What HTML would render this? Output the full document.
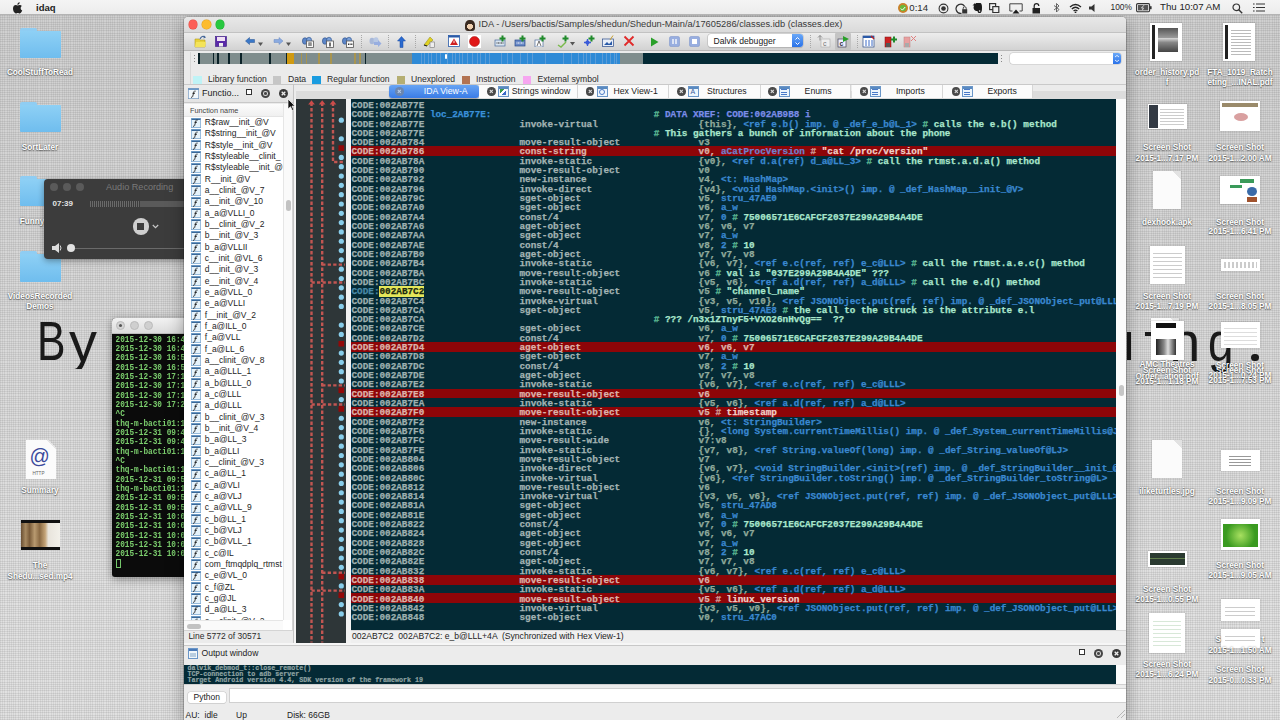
<!DOCTYPE html><html><head><meta charset="utf-8"><title>IDA</title><style>
*{margin:0;padding:0;box-sizing:border-box}
html,body{width:1280px;height:720px;overflow:hidden}
body{position:relative;font-family:"Liberation Sans",sans-serif;
 background-color:#dfdfdf;
 background-image:repeating-linear-gradient(0deg,rgba(0,0,0,.07) 0 1px,transparent 1px 2.2px),repeating-linear-gradient(90deg,rgba(0,0,0,.06) 0 1px,transparent 1px 2.2px),linear-gradient(180deg,rgba(0,0,0,.07),rgba(255,255,255,.05) 85%);}
.a{position:absolute}
.t{position:absolute;white-space:pre;line-height:1}
.mono{font-family:"Liberation Mono",monospace}
</style></head><body>
<div class="t" style="left:36.7px;top:313.2px;font-family:'Liberation Sans',sans-serif;font-size:55.9px;color:#1a1a1a;transform:scaleX(0.765);transform-origin:0 0">B</div>
<div class="a" style="left:60px;top:320px;width:45px;height:48.5px;overflow:hidden"><div class="t" style="left:8.9px;top:-6.5px;font-family:'Liberation Sans',sans-serif;font-size:55.9px;color:#1a1a1a;">y</div></div>
<div class="a" style="left:1127px;top:332px;width:4px;height:28px;background:#1a1a1a"></div>
<div class="a" style="left:1145px;top:332px;width:7px;height:3.5px;background:#1a1a1a"></div>
<div class="t" style="left:1169.3px;top:313.5px;font-family:'Liberation Sans',sans-serif;font-size:55.9px;color:#1a1a1a;">n</div>
<div class="t" style="left:1208.3px;top:313.5px;font-family:'Liberation Sans',sans-serif;font-size:55.9px;color:#1a1a1a;transform:scaleX(0.82);transform-origin:0 0">g</div>
<div class="a" style="left:1251.2px;top:353.7px;width:7.6px;height:7.6px;border-radius:50%;background:#1a1a1a"></div>
<div class="a" style="left:20px;top:28px;width:17px;height:5px;background:#8fcdf3;border-radius:2px 2px 0 0"></div>
<div class="a" style="left:20px;top:31px;width:41px;height:27px;background:linear-gradient(#8ed0f5,#6fbdee);border-radius:1px"></div>
<div class="t" style="left:-110px;width:300px;text-align:center;top:68.9px;font-size:8.2px;color:#fff;font-weight:bold;text-shadow:0 0 2px rgba(0,0,0,.55),0 1px 1px rgba(0,0,0,.4)">CoolStuffToRead</div>
<div class="a" style="left:20px;top:102px;width:17px;height:5px;background:#8fcdf3;border-radius:2px 2px 0 0"></div>
<div class="a" style="left:20px;top:105px;width:41px;height:27px;background:linear-gradient(#8ed0f5,#6fbdee);border-radius:1px"></div>
<div class="t" style="left:-110px;width:300px;text-align:center;top:143.9px;font-size:8.2px;color:#fff;font-weight:bold;text-shadow:0 0 2px rgba(0,0,0,.55),0 1px 1px rgba(0,0,0,.4)">SortLater</div>
<div class="a" style="left:20px;top:176px;width:17px;height:5px;background:#8fcdf3;border-radius:2px 2px 0 0"></div>
<div class="a" style="left:20px;top:179px;width:41px;height:27px;background:linear-gradient(#8ed0f5,#6fbdee);border-radius:1px"></div>
<div class="t" style="left:-118px;width:300px;text-align:center;top:217.9px;font-size:8.2px;color:#fff;font-weight:bold;text-shadow:0 0 2px rgba(0,0,0,.55),0 1px 1px rgba(0,0,0,.4)">Funny</div>
<div class="a" style="left:20px;top:251px;width:17px;height:5px;background:#8fcdf3;border-radius:2px 2px 0 0"></div>
<div class="a" style="left:20px;top:254px;width:41px;height:28px;background:linear-gradient(#8ed0f5,#6fbdee);border-radius:1px"></div>
<div class="t" style="left:-110px;width:300px;text-align:center;top:292.9px;font-size:8.2px;color:#fff;font-weight:bold;text-shadow:0 0 2px rgba(0,0,0,.55),0 1px 1px rgba(0,0,0,.4)">VideosRecorded</div>
<div class="t" style="left:-110px;width:300px;text-align:center;top:303.4px;font-size:8.2px;color:#fff;font-weight:bold;text-shadow:0 0 2px rgba(0,0,0,.55),0 1px 1px rgba(0,0,0,.4)">Demos</div>
<div class="a" style="left:25.5px;top:440px;width:30px;height:39px;background:linear-gradient(225deg,transparent 0 5px,#e6e6e6 5px 7px,#fbfbfb 7px);filter:drop-shadow(0 0 .6px rgba(0,0,0,.35))"></div>
<div class="t" style="left:29.5px;top:446px;font-size:20px;color:#3b4a9c;font-family:'Liberation Sans',sans-serif">@</div>
<div class="t" style="left:32.5px;top:472px;font-size:4.6px;color:#666">HTTP</div>
<div class="t" style="left:-110px;width:300px;text-align:center;top:486.9px;font-size:8.2px;color:#fff;font-weight:bold;text-shadow:0 0 2px rgba(0,0,0,.55),0 1px 1px rgba(0,0,0,.4)">Summary</div>
<div class="a" style="left:21px;top:520px;width:39px;height:30px;background:#111"><div class="a" style="left:0;top:3px;width:39px;height:24px;background:linear-gradient(90deg,#6a5034,#a58860 12%,#7a5c3a 22%,#b89a70 35%,#8a6a44 48%,#c4a478 62%,#e8e4dc 70%,#f2f0ea 100%)"></div></div>
<div class="t" style="left:-110px;width:300px;text-align:center;top:561.9px;font-size:8.2px;color:#fff;font-weight:bold;text-shadow:0 0 2px rgba(0,0,0,.55),0 1px 1px rgba(0,0,0,.4)">The</div>
<div class="t" style="left:-110px;width:300px;text-align:center;top:572.9px;font-size:8.2px;color:#fff;font-weight:bold;text-shadow:0 0 2px rgba(0,0,0,.55),0 1px 1px rgba(0,0,0,.4)">Shedu...sed.mp4</div>
<div class="a" style="left:1150px;top:23px;width:32px;height:38px;background:#fff;box-shadow:0 0 1px rgba(0,0,0,.45);"><div class="a" style="left:2px;top:2px;width:3px;height:34px;background:#222"></div><div class="a" style="left:8px;top:5px;width:20px;height:24px;background:linear-gradient(#555,#999 40%,#ddd 41%,#888 60%,#444)"></div></div>
<div class="t" style="left:1017px;width:300px;text-align:center;top:69.3px;font-size:8.2px;color:#fff;font-weight:bold;text-shadow:0 0 2px rgba(0,0,0,.55),0 1px 1px rgba(0,0,0,.4)">order_history.pd</div>
<div class="t" style="left:1017px;width:300px;text-align:center;top:78.9px;font-size:8.2px;color:#fff;font-weight:bold;text-shadow:0 0 2px rgba(0,0,0,.55),0 1px 1px rgba(0,0,0,.4)">f</div>
<div class="a" style="left:1223px;top:23px;width:32px;height:38px;background:#fff;box-shadow:0 0 1px rgba(0,0,0,.45);"><div class="a" style="left:2px;top:2px;width:3px;height:34px;background:#222"></div><div class="a" style="left:8px;top:6px;width:20px;height:26px;background:repeating-linear-gradient(#fff 0 1px,#bbb 1px 2px,#fff 2px 3px)"></div></div>
<div class="t" style="left:1090px;width:300px;text-align:center;top:69.3px;font-size:8.2px;color:#fff;font-weight:bold;text-shadow:0 0 2px rgba(0,0,0,.55),0 1px 1px rgba(0,0,0,.4)">FTA_1019_Ratch</div>
<div class="t" style="left:1090px;width:300px;text-align:center;top:78.9px;font-size:8.2px;color:#fff;font-weight:bold;text-shadow:0 0 2px rgba(0,0,0,.55),0 1px 1px rgba(0,0,0,.4)">eting_...INAL.pdf</div>
<div class="a" style="left:1148px;top:104px;width:39px;height:25px;background:#fff;box-shadow:0 0 1px rgba(0,0,0,.45);"><div class="a" style="left:1px;top:1px;width:9px;height:23px;background:#333a44"></div><div class="a" style="left:12px;top:3px;width:24px;height:18px;background:repeating-linear-gradient(#fff 0 2px,#ccc 2px 3px)"></div></div>
<div class="t" style="left:1017px;width:300px;text-align:center;top:143.7px;font-size:8.2px;color:#fff;font-weight:bold;text-shadow:0 0 2px rgba(0,0,0,.55),0 1px 1px rgba(0,0,0,.4)">Screen Shot</div>
<div class="t" style="left:1017px;width:300px;text-align:center;top:154.6px;font-size:8.2px;color:#fff;font-weight:bold;text-shadow:0 0 2px rgba(0,0,0,.55),0 1px 1px rgba(0,0,0,.4)">2015-1...7.17 PM</div>
<div class="a" style="left:1220px;top:101px;width:40px;height:30px;background:#fff;box-shadow:0 0 1px rgba(0,0,0,.45);"><div class="a" style="left:2px;top:2px;width:36px;height:4px;background:#9a8a6a"></div><div class="a" style="left:14px;top:12px;width:14px;height:8px;background:#d9a0a0;border-radius:50%"></div></div>
<div class="t" style="left:1090px;width:300px;text-align:center;top:143.7px;font-size:8.2px;color:#fff;font-weight:bold;text-shadow:0 0 2px rgba(0,0,0,.55),0 1px 1px rgba(0,0,0,.4)">Screen Shot</div>
<div class="t" style="left:1090px;width:300px;text-align:center;top:154.6px;font-size:8.2px;color:#fff;font-weight:bold;text-shadow:0 0 2px rgba(0,0,0,.55),0 1px 1px rgba(0,0,0,.4)">2015-1...2.00 AM</div>
<div class="a" style="left:1153px;top:171px;width:28px;height:38px;background:linear-gradient(225deg,#e2e2e2 0 6px,#fbfbfb 6px);box-shadow:0 0 1px rgba(0,0,0,.3)"></div>
<div class="t" style="left:1017px;width:300px;text-align:center;top:218.7px;font-size:8.2px;color:#fff;font-weight:bold;text-shadow:0 0 2px rgba(0,0,0,.55),0 1px 1px rgba(0,0,0,.4)">dexhook.apk</div>
<div class="a" style="left:1220px;top:176px;width:40px;height:28px;background:#fff;box-shadow:0 0 1px rgba(0,0,0,.45);"><div class="a" style="left:20px;top:3px;width:14px;height:4px;background:#3a9a5a"></div><div class="a" style="left:10px;top:9px;width:12px;height:3px;background:#3a9a5a"></div><div class="a" style="left:27px;top:11px;width:10px;height:9px;background:#3a6aa8;border-radius:50%"></div><div class="a" style="left:27px;top:21px;width:10px;height:5px;background:#a0522d"></div></div>
<div class="t" style="left:1090px;width:300px;text-align:center;top:218.7px;font-size:8.2px;color:#fff;font-weight:bold;text-shadow:0 0 2px rgba(0,0,0,.55),0 1px 1px rgba(0,0,0,.4)">Screen Shot</div>
<div class="t" style="left:1090px;width:300px;text-align:center;top:228.4px;font-size:8.2px;color:#fff;font-weight:bold;text-shadow:0 0 2px rgba(0,0,0,.55),0 1px 1px rgba(0,0,0,.4)">2015-1...6.41 PM</div>
<div class="a" style="left:1150px;top:246px;width:35px;height:38px;background:#fff;box-shadow:0 0 1px rgba(0,0,0,.45);"><div class="a" style="left:3px;top:4px;width:29px;height:30px;background:repeating-linear-gradient(#fff 0 3px,#ccc 3px 4px)"></div></div>
<div class="t" style="left:1017px;width:300px;text-align:center;top:292.9px;font-size:8.2px;color:#fff;font-weight:bold;text-shadow:0 0 2px rgba(0,0,0,.55),0 1px 1px rgba(0,0,0,.4)">Screen Shot</div>
<div class="t" style="left:1017px;width:300px;text-align:center;top:302.9px;font-size:8.2px;color:#fff;font-weight:bold;text-shadow:0 0 2px rgba(0,0,0,.55),0 1px 1px rgba(0,0,0,.4)">2015-1...7.19 PM</div>
<div class="a" style="left:1221px;top:259px;width:39px;height:12px;background:#fff;box-shadow:0 0 1px rgba(0,0,0,.45);"><div class="a" style="left:3px;top:3px;width:33px;height:6px;background:repeating-linear-gradient(90deg,#ccc 0 2px,#fff 2px 4px)"></div></div>
<div class="t" style="left:1090px;width:300px;text-align:center;top:292.9px;font-size:8.2px;color:#fff;font-weight:bold;text-shadow:0 0 2px rgba(0,0,0,.55),0 1px 1px rgba(0,0,0,.4)">Screen Shot</div>
<div class="t" style="left:1090px;width:300px;text-align:center;top:302.9px;font-size:8.2px;color:#fff;font-weight:bold;text-shadow:0 0 2px rgba(0,0,0,.55),0 1px 1px rgba(0,0,0,.4)">2015-1...8.05 PM</div>
<div class="a" style="left:1151px;top:318px;width:28px;height:10px;background:linear-gradient(225deg,#e2e2e2 0 6px,#fbfbfb 6px);box-shadow:0 0 1px rgba(0,0,0,.3)"></div>
<div class="a" style="left:1151px;top:321px;width:33px;height:39px;background:#fff;box-shadow:0 0 1px rgba(0,0,0,.45);"><div class="a" style="left:5px;top:2px;width:20px;height:5px;background:#111"></div><div class="a" style="left:5px;top:18px;width:20px;height:16px;background:linear-gradient(90deg,#222,#888 40%,#ddd 60%,#333)"></div></div>
<div class="a" style="left:1221px;top:322px;width:39px;height:26px;background:#fff;box-shadow:0 0 1px rgba(0,0,0,.45);"><div class="a" style="left:3px;top:3px;width:33px;height:20px;background:repeating-linear-gradient(#fff 0 3px,#ddd 3px 4px)"></div></div>
<div class="t" style="left:1017px;width:300px;text-align:center;top:360.9px;font-size:8.2px;color:#fff;font-weight:bold;text-shadow:0 0 2px rgba(0,0,0,.55),0 1px 1px rgba(0,0,0,.4)">AMC Theatres</div>
<div class="t" style="left:1017px;width:300px;text-align:center;top:366.9px;font-size:8.2px;color:#fff;font-weight:bold;text-shadow:0 0 2px rgba(0,0,0,.55),0 1px 1px rgba(0,0,0,.4)">Screen Shot</div>
<div class="t" style="left:1017px;width:300px;text-align:center;top:372.9px;font-size:8.2px;color:#fff;font-weight:bold;text-shadow:0 0 2px rgba(0,0,0,.55),0 1px 1px rgba(0,0,0,.4)">Order...ation.pdf</div>
<div class="t" style="left:1017px;width:300px;text-align:center;top:377.9px;font-size:8.2px;color:#fff;font-weight:bold;text-shadow:0 0 2px rgba(0,0,0,.55),0 1px 1px rgba(0,0,0,.4)">2015-1...1.18 PM</div>
<div class="t" style="left:1090px;width:300px;text-align:center;top:361.9px;font-size:8.2px;color:#fff;font-weight:bold;text-shadow:0 0 2px rgba(0,0,0,.55),0 1px 1px rgba(0,0,0,.4)">Screen Shot</div>
<div class="t" style="left:1090px;width:300px;text-align:center;top:366.9px;font-size:8.2px;color:#fff;font-weight:bold;text-shadow:0 0 2px rgba(0,0,0,.55),0 1px 1px rgba(0,0,0,.4)">Screen Shot</div>
<div class="t" style="left:1090px;width:300px;text-align:center;top:372.4px;font-size:8.2px;color:#fff;font-weight:bold;text-shadow:0 0 2px rgba(0,0,0,.55),0 1px 1px rgba(0,0,0,.4)">2015-1...0.24 PM</div>
<div class="t" style="left:1090px;width:300px;text-align:center;top:376.9px;font-size:8.2px;color:#fff;font-weight:bold;text-shadow:0 0 2px rgba(0,0,0,.55),0 1px 1px rgba(0,0,0,.4)">2015-1...7.53 PM</div>
<div class="a" style="left:1152px;top:440px;width:30px;height:38px;background:linear-gradient(225deg,#e2e2e2 0 6px,#fbfbfb 6px);box-shadow:0 0 1px rgba(0,0,0,.3)"></div>
<div class="t" style="left:1017px;width:300px;text-align:center;top:487.5px;font-size:8.2px;color:#fff;font-weight:bold;text-shadow:0 0 2px rgba(0,0,0,.55),0 1px 1px rgba(0,0,0,.4)">iliketurtles.jpg</div>
<div class="a" style="left:1221px;top:450px;width:39px;height:21px;background:#fff;box-shadow:0 0 1px rgba(0,0,0,.45);"><div class="a" style="left:8px;top:4px;width:22px;height:12px;background:repeating-linear-gradient(#fff 0 2px,#999 2px 3px)"></div></div>
<div class="t" style="left:1090px;width:300px;text-align:center;top:487.5px;font-size:8.2px;color:#fff;font-weight:bold;text-shadow:0 0 2px rgba(0,0,0,.55),0 1px 1px rgba(0,0,0,.4)">Screen Shot</div>
<div class="t" style="left:1090px;width:300px;text-align:center;top:498.4px;font-size:8.2px;color:#fff;font-weight:bold;text-shadow:0 0 2px rgba(0,0,0,.55),0 1px 1px rgba(0,0,0,.4)">2015-1...9.09 PM</div>
<div class="a" style="left:1221px;top:519px;width:39px;height:31px;background:#fff;box-shadow:0 0 1px rgba(0,0,0,.45);"><div class="a" style="left:2px;top:5px;width:35px;height:23px;background:radial-gradient(circle,#a8e060,#3a9a20 70%)"></div></div>
<div class="t" style="left:1090px;width:300px;text-align:center;top:561.7px;font-size:8.2px;color:#fff;font-weight:bold;text-shadow:0 0 2px rgba(0,0,0,.55),0 1px 1px rgba(0,0,0,.4)">Screen Shot</div>
<div class="t" style="left:1090px;width:300px;text-align:center;top:571.9px;font-size:8.2px;color:#fff;font-weight:bold;text-shadow:0 0 2px rgba(0,0,0,.55),0 1px 1px rgba(0,0,0,.4)">2015-1...9.05 AM</div>
<div class="a" style="left:1148px;top:551px;width:39px;height:16px;background:#fff;box-shadow:0 0 1px rgba(0,0,0,.45);"><div class="a" style="left:2px;top:2px;width:35px;height:12px;background:linear-gradient(#2a3a30,#2a3a30 40%,#6a8a50 45%,#2a3a30 50%)"></div></div>
<div class="t" style="left:1017px;width:300px;text-align:center;top:585.9px;font-size:8.2px;color:#fff;font-weight:bold;text-shadow:0 0 2px rgba(0,0,0,.55),0 1px 1px rgba(0,0,0,.4)">Screen Shot</div>
<div class="t" style="left:1017px;width:300px;text-align:center;top:595.9px;font-size:8.2px;color:#fff;font-weight:bold;text-shadow:0 0 2px rgba(0,0,0,.55),0 1px 1px rgba(0,0,0,.4)">2015-1...0.55 PM</div>
<div class="a" style="left:1149px;top:613px;width:36px;height:40px;background:#fff;box-shadow:0 0 1px rgba(0,0,0,.45);"><div class="a" style="left:4px;top:5px;width:28px;height:30px;background:repeating-linear-gradient(#fff 0 3px,#d8e8d8 3px 4px)"></div></div>
<div class="t" style="left:1017px;width:300px;text-align:center;top:660.7px;font-size:8.2px;color:#fff;font-weight:bold;text-shadow:0 0 2px rgba(0,0,0,.55),0 1px 1px rgba(0,0,0,.4)">Screen Shot</div>
<div class="t" style="left:1017px;width:300px;text-align:center;top:670.9px;font-size:8.2px;color:#fff;font-weight:bold;text-shadow:0 0 2px rgba(0,0,0,.55),0 1px 1px rgba(0,0,0,.4)">2015-1...6.24 PM</div>
<div class="a" style="left:1221px;top:599px;width:39px;height:22px;background:#fff;box-shadow:0 0 1px rgba(0,0,0,.45);"><div class="a" style="left:4px;top:5px;width:30px;height:12px;background:repeating-linear-gradient(#fff 0 3px,#ccc 3px 4px)"></div></div>
<div class="a" style="left:1221px;top:629px;width:39px;height:19px;background:#fff;box-shadow:0 0 1px rgba(0,0,0,.45);"><div class="a" style="left:4px;top:4px;width:30px;height:10px;background:repeating-linear-gradient(#fff 0 3px,#ccc 3px 4px)"></div></div>
<div class="t" style="left:1090px;width:300px;text-align:center;top:635.9px;font-size:8.2px;color:#fff;font-weight:bold;text-shadow:0 0 2px rgba(0,0,0,.55),0 1px 1px rgba(0,0,0,.4)">S                  t</div>
<div class="t" style="left:1090px;width:300px;text-align:center;top:646.9px;font-size:8.2px;color:#fff;font-weight:bold;text-shadow:0 0 2px rgba(0,0,0,.55),0 1px 1px rgba(0,0,0,.4)">2015-1...1.50 AM</div>
<div class="t" style="left:1090px;width:300px;text-align:center;top:665.9px;font-size:8.2px;color:#fff;font-weight:bold;text-shadow:0 0 2px rgba(0,0,0,.55),0 1px 1px rgba(0,0,0,.4)">Screen Shot</div>
<div class="t" style="left:1090px;width:300px;text-align:center;top:676.9px;font-size:8.2px;color:#fff;font-weight:bold;text-shadow:0 0 2px rgba(0,0,0,.55),0 1px 1px rgba(0,0,0,.4)">2015-0...0.33 PM</div>
<div class="a" style="left:44px;top:179px;width:160px;height:80px;background:#3c3c3c;border-radius:4px;box-shadow:0 2px 6px rgba(0,0,0,.35)">
<div class="a" style="left:5.899999999999999px;top:4px;width:8px;height:8px;border-radius:50%;background:#5a5a5a"></div>
<div class="a" style="left:19.200000000000003px;top:4px;width:8px;height:8px;border-radius:50%;background:#5a5a5a"></div>
<div class="a" style="left:32.400000000000006px;top:4px;width:8px;height:8px;border-radius:50%;background:#5a5a5a"></div>
<div class="t" style="left:62px;top:3.8px;font-size:9.1px;color:#7a7a7a">Audio Recording</div>
<div class="t" style="left:8.5px;top:20.5px;font-size:8px;color:#e4e4e4;font-weight:bold">07:39</div>
<div class="a" style="left:46px;top:21.8px;width:50px;height:6px;background:repeating-linear-gradient(90deg,#6a6a6a 0 1px,#3c3c3c 1px 2px)"></div>
<div class="a" style="left:96px;top:21.8px;width:70px;height:6px;background:#5a5a5a"></div>
<div class="a" style="left:88.5px;top:39px;width:16.5px;height:16.5px;border-radius:50%;background:#cfcfcf"></div>
<div class="a" style="left:93.3px;top:43.8px;width:7px;height:7px;background:#3c3c3c"></div>
<svg class="a" style="left:108px;top:44.5px" width="7" height="5"><path d="M.8 1l2.7 2.6L6.2 1" stroke="#c8c8c8" stroke-width="1.2" fill="none"/></svg>
<svg class="a" style="left:8px;top:64px" width="10" height="10"><path d="M0 3h3l4-3v10l-4-3H0z" fill="#ddd"/><path d="M8.2 2.5q1.6 2.5 0 5" stroke="#ddd" fill="none" stroke-width="1"/></svg>
<div class="a" style="left:30px;top:68.5px;width:140px;height:1.5px;background:#6a6a6a"></div>
<div class="a" style="left:22.5px;top:64.5px;width:8px;height:8px;border-radius:50%;background:#e2e2e2"></div>
</div>
<div class="a" style="left:112px;top:318px;width:100px;height:259px;background:#0b0b0b;border-radius:4px 4px 3px 3px;box-shadow:0 2px 8px rgba(0,0,0,.4);overflow:hidden">
<div class="a" style="left:0;top:0;width:100px;height:15.5px;background:linear-gradient(#f2f2f2,#dcdcdc);border-bottom:1px solid #bdbdbd"></div>
<div class="a" style="left:4.400000000000006px;top:3px;width:9px;height:9px;border-radius:50%;background:#d4d4d4;border:0.5px solid #bbb"></div>
<div class="a" style="left:18.099999999999994px;top:3px;width:9px;height:9px;border-radius:50%;background:#cfcfcf;border:0.5px solid #bbb"></div>
<div class="a" style="left:31.599999999999994px;top:3px;width:9px;height:9px;border-radius:50%;background:#cfcfcf;border:0.5px solid #bbb"></div>
<div class="a" style="left:7.2px;top:6.4px;width:3px;height:3px;border-radius:50%;background:#555"></div>
<div class="t mono" style="left:3.5px;top:18.60px;font-size:7.75px;color:#7ccf6e;font-weight:bold;transform:scaleY(1.18);transform-origin:0 50%">2015-12-30 16:4</div>
<div class="t mono" style="left:3.5px;top:27.94px;font-size:7.75px;color:#7ccf6e;font-weight:bold;transform:scaleY(1.18);transform-origin:0 50%">2015-12-30 16:4</div>
<div class="t mono" style="left:3.5px;top:37.28px;font-size:7.75px;color:#7ccf6e;font-weight:bold;transform:scaleY(1.18);transform-origin:0 50%">2015-12-30 16:5</div>
<div class="t mono" style="left:3.5px;top:46.62px;font-size:7.75px;color:#7ccf6e;font-weight:bold;transform:scaleY(1.18);transform-origin:0 50%">2015-12-30 16:5</div>
<div class="t mono" style="left:3.5px;top:55.96px;font-size:7.75px;color:#7ccf6e;font-weight:bold;transform:scaleY(1.18);transform-origin:0 50%">2015-12-30 17:1</div>
<div class="t mono" style="left:3.5px;top:65.30px;font-size:7.75px;color:#7ccf6e;font-weight:bold;transform:scaleY(1.18);transform-origin:0 50%">2015-12-30 17:1</div>
<div class="t mono" style="left:3.5px;top:74.64px;font-size:7.75px;color:#7ccf6e;font-weight:bold;transform:scaleY(1.18);transform-origin:0 50%">2015-12-30 17:1</div>
<div class="t mono" style="left:3.5px;top:83.98px;font-size:7.75px;color:#7ccf6e;font-weight:bold;transform:scaleY(1.18);transform-origin:0 50%">2015-12-30 17:2</div>
<div class="t mono" style="left:3.5px;top:93.32px;font-size:7.75px;color:#7ccf6e;font-weight:bold;transform:scaleY(1.18);transform-origin:0 50%">^C</div>
<div class="t mono" style="left:3.5px;top:102.66px;font-size:7.75px;color:#7ccf6e;font-weight:bold;transform:scaleY(1.18);transform-origin:0 50%">thq-m-bacti01:1</div>
<div class="t mono" style="left:3.5px;top:112.00px;font-size:7.75px;color:#7ccf6e;font-weight:bold;transform:scaleY(1.18);transform-origin:0 50%">2015-12-31 09:4</div>
<div class="t mono" style="left:3.5px;top:121.34px;font-size:7.75px;color:#7ccf6e;font-weight:bold;transform:scaleY(1.18);transform-origin:0 50%">2015-12-31 09:4</div>
<div class="t mono" style="left:3.5px;top:130.68px;font-size:7.75px;color:#7ccf6e;font-weight:bold;transform:scaleY(1.18);transform-origin:0 50%">thq-m-bacti01:1</div>
<div class="t mono" style="left:3.5px;top:140.02px;font-size:7.75px;color:#7ccf6e;font-weight:bold;transform:scaleY(1.18);transform-origin:0 50%">^C</div>
<div class="t mono" style="left:3.5px;top:149.36px;font-size:7.75px;color:#7ccf6e;font-weight:bold;transform:scaleY(1.18);transform-origin:0 50%">thq-m-bacti01:1</div>
<div class="t mono" style="left:3.5px;top:158.70px;font-size:7.75px;color:#7ccf6e;font-weight:bold;transform:scaleY(1.18);transform-origin:0 50%">2015-12-31 09:5</div>
<div class="t mono" style="left:3.5px;top:168.04px;font-size:7.75px;color:#7ccf6e;font-weight:bold;transform:scaleY(1.18);transform-origin:0 50%">thq-m-bacti01:1</div>
<div class="t mono" style="left:3.5px;top:177.38px;font-size:7.75px;color:#7ccf6e;font-weight:bold;transform:scaleY(1.18);transform-origin:0 50%">2015-12-31 09:5</div>
<div class="t mono" style="left:3.5px;top:186.72px;font-size:7.75px;color:#7ccf6e;font-weight:bold;transform:scaleY(1.18);transform-origin:0 50%">2015-12-31 09:5</div>
<div class="t mono" style="left:3.5px;top:196.06px;font-size:7.75px;color:#7ccf6e;font-weight:bold;transform:scaleY(1.18);transform-origin:0 50%">2015-12-31 10:0</div>
<div class="t mono" style="left:3.5px;top:205.40px;font-size:7.75px;color:#7ccf6e;font-weight:bold;transform:scaleY(1.18);transform-origin:0 50%">2015-12-31 10:0</div>
<div class="t mono" style="left:3.5px;top:214.74px;font-size:7.75px;color:#7ccf6e;font-weight:bold;transform:scaleY(1.18);transform-origin:0 50%">2015-12-31 10:0</div>
<div class="t mono" style="left:3.5px;top:224.08px;font-size:7.75px;color:#7ccf6e;font-weight:bold;transform:scaleY(1.18);transform-origin:0 50%">2015-12-31 10:0</div>
<div class="t mono" style="left:3.5px;top:233.42px;font-size:7.75px;color:#7ccf6e;font-weight:bold;transform:scaleY(1.18);transform-origin:0 50%">2015-12-31 10:0</div>
<div class="a" style="left:4px;top:240.56px;width:5px;height:9px;border:1px solid #74c66a"></div>
</div>
<div class="a" style="left:184px;top:17px;width:942px;height:703px;background:#ebebeb;border-radius:4px 4px 0 0;box-shadow:0 0 0 .6px rgba(0,0,0,.25),0 6px 18px rgba(0,0,0,.35);overflow:hidden">
<div class="a" style="left:0;top:0;width:942px;height:15px;background:linear-gradient(#e8e8e8,#dadada)"></div>
<div class="a" style="left:0;top:14.5px;width:942px;height:19px;background:linear-gradient(#ededed,#d2d2d2);border-top:.8px solid #c2c2c2;border-bottom:.8px solid #b8b8b8"></div>
</div>
<div class="a" style="left:188.79999999999998px;top:20.4px;width:8.6px;height:8.6px;border-radius:50%;background:#fc5f57;box-shadow:0 0 0 .5px #de4a41"></div>
<div class="a" style="left:202.29999999999998px;top:20.4px;width:8.6px;height:8.6px;border-radius:50%;background:#fdbc2e;box-shadow:0 0 0 .5px #de9f23"></div>
<div class="a" style="left:215.7px;top:20.4px;width:8.6px;height:8.6px;border-radius:50%;background:#28c840;box-shadow:0 0 0 .5px #1aab29"></div>
<div class="a" style="left:465px;top:19.5px;width:10px;height:11px;border-radius:45% 45% 30% 30%;background:radial-gradient(circle at 50% 60%,#f0d0b0 35%,#3a2a20 36%)"></div>
<div class="t" style="left:478.6px;top:20.4px;font-size:9.29px;color:#3a3a3a">IDA - /Users/bactis/Samples/shedun/Shedun-Main/a/17605286/classes.idb (classes.dex)</div>
<svg class="a" style="left:194px;top:35px;" width="13" height="13" viewBox="0 0 13 13"><path d="M1 4h4l1 1h5v7H1z" fill="#e8d23a" stroke="#b49a20" stroke-width=".6"/><path d="M2 7h10l-1 5H1z" fill="#f4e45a"/><path d="M6 4q2-4 5-2" stroke="#4a6a9a" stroke-width="1.3" fill="none"/><path d="M10 0.5l2 2-2.5 1z" fill="#4a6a9a"/></svg>
<svg class="a" style="left:215px;top:35.5px;" width="12" height="11" viewBox="0 0 12 11"><rect x=".5" y=".5" width="11" height="10" fill="#5a2aa8" stroke="#3a1a80" stroke-width=".6"/><rect x="2" y="1" width="8" height="4" fill="#f0e0f4"/><rect x="4" y="7" width="4" height="3.5" fill="#eee"/></svg>
<svg class="a" style="left:245px;top:37px;" width="18" height="10" viewBox="0 0 18 10"><path d="M0.5 4l4-3.5v2h5v3h-5v2z" fill="#3a78c8" stroke="#245090" stroke-width=".5"/><path d="M13 5.5h5l-2.5 3.5z" fill="#555"/></svg>
<svg class="a" style="left:273px;top:37px;" width="18" height="10" viewBox="0 0 18 10"><path d="M10 4l-4-3.5v2H1v3h5v2z" fill="#8aaae0" stroke="#6a8ac0" stroke-width=".5"/><path d="M13 5.5h5l-2.5 3.5z" fill="#555"/></svg>
<svg class="a" style="left:302px;top:36px;" width="12" height="12" viewBox="0 0 12 12"><ellipse cx="3" cy="5" rx="2.6" ry="3.3" fill="#5d86c8" stroke="#2a4f8a" stroke-width=".6"/><ellipse cx="7" cy="4.5" rx="2.6" ry="3.3" fill="#7aa0d8" stroke="#2a4f8a" stroke-width=".6"/><rect x="4.5" y="5" width="7" height="6.5" fill="#fafafa" stroke="#555" stroke-width=".8"/><path d="M6.5 7h3M6.5 9h3M7 6.5v3.5M9 6.5v3.5" stroke="#222" stroke-width=".6"/></svg>
<svg class="a" style="left:322px;top:36px;" width="12" height="12" viewBox="0 0 12 12"><ellipse cx="3" cy="5" rx="2.6" ry="3.3" fill="#5d86c8" stroke="#2a4f8a" stroke-width=".6"/><ellipse cx="7" cy="4.5" rx="2.6" ry="3.3" fill="#7aa0d8" stroke="#2a4f8a" stroke-width=".6"/><rect x="4.5" y="5" width="7" height="6.5" fill="#fafafa" stroke="#555" stroke-width=".8"/><path d="M8 6.5v4" stroke="#111" stroke-width="1.2"/></svg>
<svg class="a" style="left:342px;top:36px;" width="12" height="12" viewBox="0 0 12 12"><ellipse cx="3" cy="5" rx="2.6" ry="3.3" fill="#5d86c8" stroke="#2a4f8a" stroke-width=".6"/><ellipse cx="7" cy="4.5" rx="2.6" ry="3.3" fill="#7aa0d8" stroke="#2a4f8a" stroke-width=".6"/><rect x="4.5" y="5" width="7" height="6.5" fill="#fafafa" stroke="#555" stroke-width=".8"/><path d="M6 8.3h5" stroke="#333" stroke-width="1.4" stroke-dasharray="1 .6"/></svg>
<svg class="a" style="left:369px;top:36px;" width="13" height="12" viewBox="0 0 13 12"><ellipse cx="3" cy="5" rx="2.5" ry="3.2" fill="#a8b8d8"/><ellipse cx="7" cy="4.5" rx="2.5" ry="3.2" fill="#b8c8e4"/><path d="M5 6h4V4l3.5 3.5L9 11V9H5z" fill="#98aee0"/></svg>
<svg class="a" style="left:397px;top:36px;" width="9" height="12" viewBox="0 0 9 12"><path d="M4.5 0.5L8.5 5H6v6.5H3V5H0.5z" fill="#2a6ad0" stroke="#1a4aa0" stroke-width=".5"/></svg>
<div class="a" style="left:361.3px;top:35px;width:1px;height:13px;background:repeating-linear-gradient(#a8a8a8 0 1px,transparent 1px 2px)"></div>
<div class="a" style="left:388.4px;top:35px;width:1px;height:13px;background:repeating-linear-gradient(#a8a8a8 0 1px,transparent 1px 2px)"></div>
<div class="a" style="left:414.7px;top:35px;width:1px;height:13px;background:repeating-linear-gradient(#a8a8a8 0 1px,transparent 1px 2px)"></div>
<svg class="a" style="left:423px;top:36px;" width="12" height="12" viewBox="0 0 12 12"><path d="M1 9l6-8 3 3-6 6z" fill="#e0d020" stroke="#8a8a20" stroke-width=".5"/><path d="M1 9l3 1" stroke="#222" stroke-width="1.2"/><rect x="7" y="6" width="4.5" height="5.5" fill="#eee" stroke="#777" stroke-width=".6"/></svg>
<svg class="a" style="left:448px;top:35px;" width="12" height="12" viewBox="0 0 12 12"><rect x=".5" y=".5" width="11" height="11" fill="#fff" stroke="#2a5aa8" stroke-width=".8"/><rect x=".5" y=".5" width="11" height="2" fill="#2a5aa8"/><path d="M6 3.5l4 6.5H2z" fill="#d02020"/><path d="M6 5.5v2.5" stroke="#fff" stroke-width=".9"/></svg>
<svg class="a" style="left:468px;top:35px;" width="13" height="13" viewBox="0 0 13 13"><rect x="0" y="0" width="13" height="13" fill="#fff"/><circle cx="6.5" cy="6.5" r="5" fill="#e01818" stroke="#a01010" stroke-width=".5"/></svg>
<svg class="a" style="left:494px;top:35px;" width="12" height="12" viewBox="0 0 12 12"><rect x="1" y="5" width="10" height="6" fill="#d8e4f0" stroke="#4a6a9a" stroke-width=".7"/><path d="M2.5 8h7" stroke="#333" stroke-width="1" stroke-dasharray="1 .5"/><path d="M8.5 0.5v6M5.5 3.5h6" stroke="#1f8a2a" stroke-width="2"/></svg>
<svg class="a" style="left:514px;top:35px;" width="12" height="12" viewBox="0 0 12 12"><rect x="1" y="5" width="10" height="6" fill="#6a8ac8" stroke="#2a4a8a" stroke-width=".7"/><path d="M2.5 8h7" stroke="#fff" stroke-width="1" stroke-dasharray="1 .5"/><path d="M8.5 0.5v6M5.5 3.5h6" stroke="#1f8a2a" stroke-width="2"/></svg>
<svg class="a" style="left:534px;top:35px;" width="12" height="12" viewBox="0 0 12 12"><rect x="1" y="5" width="8" height="7" fill="#fff" stroke="#4a6a9a" stroke-width=".7"/><path d="M3 11l2-5 2 5" stroke="#333" stroke-width=".7" fill="none"/><path d="M8.5 0.5v6M5.5 3.5h6" stroke="#1f8a2a" stroke-width="2"/></svg>
<svg class="a" style="left:557px;top:35px;" width="18" height="13" viewBox="0 0 18 13"><path d="M1 10l3 2 5-5" stroke="#7aba4a" stroke-width="1.4" fill="none"/><path d="M8.5 0.5v6M5.5 3.5h6" stroke="#1f8a2a" stroke-width="2"/><path d="M13 7h5l-2.5 3.5z" fill="#555"/></svg>
<svg class="a" style="left:583px;top:35px;" width="12" height="12" viewBox="0 0 12 12"><path d="M3 9l3-3M3 6l3 3M1 7.5h7M4.5 4v7" stroke="#3a5ad8" stroke-width="1.3"/><path d="M8.5 0.5v6M5.5 3.5h6" stroke="#1f8a2a" stroke-width="2"/></svg>
<svg class="a" style="left:602px;top:35px;" width="13" height="12" viewBox="0 0 13 12"><rect x=".5" y="4" width="11" height="7.5" fill="#e8eef8" stroke="#2a4a8a" stroke-width=".7"/><path d="M2 10l3-3 2 2 3-3v4z" fill="#2a5aa8"/><path d="M8 5l3-4.5" stroke="#c8a030" stroke-width="1"/></svg>
<svg class="a" style="left:623px;top:35px;" width="12" height="12" viewBox="0 0 12 12"><path d="M1.5 1.5l9 9M10.5 1.5l-9 9" stroke="#e02a2a" stroke-width="1.8"/></svg>
<svg class="a" style="left:650px;top:37px;" width="9" height="10" viewBox="0 0 9 10"><path d="M1 0.5l7.5 4.5L1 9.5z" fill="#2aa02a"/></svg>
<svg class="a" style="left:669px;top:36px;" width="11" height="11" viewBox="0 0 11 11"><rect x=".5" y=".5" width="10" height="10" rx="1.5" fill="#98aee0" stroke="#7890c8" stroke-width=".5"/><path d="M4 3v5M7 3v5" stroke="#fff" stroke-width="1.3"/></svg>
<svg class="a" style="left:689px;top:36px;" width="11" height="11" viewBox="0 0 11 11"><rect x=".5" y=".5" width="10" height="10" rx="1.5" fill="#98aee0" stroke="#7890c8" stroke-width=".5"/><rect x="3" y="3" width="5" height="5" fill="#fff"/></svg>
<div class="a" style="left:708px;top:34.3px;width:95px;height:13.2px;background:#fff;border-radius:3px;box-shadow:0 0 0 .6px #bbb,0 .6px 1px rgba(0,0,0,.2)"></div>
<div class="t" style="left:713.5px;top:36.6px;font-size:8.6px;color:#222">Dalvik debugger</div>
<div class="a" style="left:792px;top:34.3px;width:11px;height:13.2px;background:linear-gradient(#6aa8f8,#2a72e8);border-radius:0 3px 3px 0"></div>
<svg class="a" style="left:794px;top:36px;" width="7" height="10" viewBox="0 0 7 10"><path d="M1.5 3.5l2-2 2 2M1.5 6.5l2 2 2-2" stroke="#fff" stroke-width="1" fill="none"/></svg>
<div class="a" style="left:810px;top:35px;width:1px;height:13px;background:repeating-linear-gradient(#a8a8a8 0 1px,transparent 1px 2px)"></div>
<svg class="a" style="left:817px;top:35px;" width="14" height="13" viewBox="0 0 14 13"><path d="M3 0.5v5M1 2.5l2-2 2 2" stroke="#8a8a8a" stroke-width="1" fill="none"/><rect x="4" y="4" width="9" height="8" fill="#eee" stroke="#aaa" stroke-width=".6"/><text x="6" y="11" font-size="7" font-family="Liberation Sans" fill="#777">c</text></svg>
<div class="a" style="left:835px;top:32.5px;width:16px;height:17px;background:#c4c4c4;border-radius:1px"></div>
<svg class="a" style="left:837px;top:35px;" width="13" height="13" viewBox="0 0 13 13"><rect x="1" y="4" width="8" height="8" fill="#eef" stroke="#445" stroke-width=".7"/><text x="2.5" y="11" font-size="7" font-family="Liberation Sans" font-weight="bold" fill="#334">c</text><path d="M6 1l6 3-6 3z" fill="#2aa02a"/></svg>
<div class="a" style="left:857px;top:35px;width:1px;height:13px;background:repeating-linear-gradient(#a8a8a8 0 1px,transparent 1px 2px)"></div>
<svg class="a" style="left:862px;top:35px;" width="14" height="13" viewBox="0 0 14 13"><rect x="1" y="1" width="11" height="11" fill="#fff" stroke="#2a4a8a" stroke-width=".7"/><rect x="1" y="1" width="11" height="2" fill="#2a5aa8"/><path d="M4 5v6M7 5v6M10 5v6" stroke="#3a6ac8" stroke-width="1"/><path d="M9 1l3 3" stroke="#c02020" stroke-width="1.2"/></svg>
<svg class="a" style="left:884px;top:35px;" width="14" height="13" viewBox="0 0 14 13"><rect x="1" y="2" width="6" height="10" fill="#cc2222" stroke="#801010" stroke-width=".5"/><rect x="2" y="8" width="4" height="4" fill="#555"/><path d="M10 1.5v6M7 4.5h6" stroke="#1f8a2a" stroke-width="2"/></svg>
<svg class="a" style="left:903px;top:35px;" width="14" height="13" viewBox="0 0 14 13"><rect x="1" y="2" width="6" height="10" fill="#e8a0a0" stroke="#c08080" stroke-width=".5"/><rect x="2" y="8" width="4" height="4" fill="#aaa"/><path d="M8 1l5 5M13 1l-5 5" stroke="#e08080" stroke-width="1"/></svg>
<div class="a" style="left:190px;top:52px;width:1px;height:33px;background:#d8d8d8"></div>
<div class="a" style="left:194px;top:55px;width:1px;height:8px;background:repeating-linear-gradient(#888 0 1px,transparent 1px 3px)"></div>
<div class="a" style="left:198.4px;top:53px;width:214px;height:11px;background:#7f8d8d"></div>
<div class="a" style="left:198.4px;top:53px;width:1.4000000000000057px;height:11px;background:#0b2228"></div>
<div class="a" style="left:212.5px;top:53px;width:1.5px;height:11px;background:#0b2228"></div>
<div class="a" style="left:217px;top:53px;width:1.5px;height:11px;background:#0b2228"></div>
<div class="a" style="left:228px;top:53px;width:1.5px;height:11px;background:#0b2228"></div>
<div class="a" style="left:240px;top:53px;width:1.5px;height:11px;background:#0b2228"></div>
<div class="a" style="left:269px;top:53px;width:1.5px;height:11px;background:#0b2228"></div>
<div class="a" style="left:285.5px;top:53px;width:1.5px;height:11px;background:#0b2228"></div>
<div class="a" style="left:364.7px;top:53px;width:1.5px;height:11px;background:#0b2228"></div>
<div class="a" style="left:287px;top:53px;width:6.5px;height:11px;background:#d09a12"></div>
<div class="a" style="left:300.5px;top:53px;width:1.5px;height:11px;background:#a89450"></div>
<div class="a" style="left:305.5px;top:53px;width:1.5px;height:11px;background:#a89450"></div>
<div class="a" style="left:318px;top:53px;width:1.5px;height:11px;background:#a89450"></div>
<div class="a" style="left:330px;top:53px;width:1.5px;height:11px;background:#a89450"></div>
<div class="a" style="left:354px;top:53px;width:1.5px;height:11px;background:#a89450"></div>
<div class="a" style="left:359px;top:53px;width:1.5px;height:11px;background:#a89450"></div>
<div class="a" style="left:412.3px;top:53px;width:208px;height:11px;background:#2e8ad6"></div>
<div class="a" style="left:421px;top:53px;width:1px;height:11px;background:#5a9cd8"></div>
<div class="a" style="left:424px;top:53px;width:0.8px;height:11px;background:#5a9cd8"></div>
<div class="a" style="left:428px;top:53px;width:1px;height:11px;background:#5a9cd8"></div>
<div class="a" style="left:431px;top:53px;width:1.3px;height:11px;background:#5a9cd8"></div>
<div class="a" style="left:436px;top:53px;width:0.8px;height:11px;background:#5a9cd8"></div>
<div class="a" style="left:440px;top:53px;width:0.8px;height:11px;background:#5a9cd8"></div>
<div class="a" style="left:447px;top:53px;width:1.3px;height:11px;background:#5a9cd8"></div>
<div class="a" style="left:452px;top:53px;width:0.8px;height:11px;background:#5a9cd8"></div>
<div class="a" style="left:455px;top:53px;width:1px;height:11px;background:#5a9cd8"></div>
<div class="a" style="left:459px;top:53px;width:1.3px;height:11px;background:#5a9cd8"></div>
<div class="a" style="left:462px;top:53px;width:0.8px;height:11px;background:#5a9cd8"></div>
<div class="a" style="left:467px;top:53px;width:1.3px;height:11px;background:#5a9cd8"></div>
<div class="a" style="left:472px;top:53px;width:0.8px;height:11px;background:#5a9cd8"></div>
<div class="a" style="left:477px;top:53px;width:0.8px;height:11px;background:#5a9cd8"></div>
<div class="a" style="left:480px;top:53px;width:0.8px;height:11px;background:#5a9cd8"></div>
<div class="a" style="left:485px;top:53px;width:1px;height:11px;background:#5a9cd8"></div>
<div class="a" style="left:489px;top:53px;width:1px;height:11px;background:#5a9cd8"></div>
<div class="a" style="left:501px;top:53px;width:0.8px;height:11px;background:#5a9cd8"></div>
<div class="a" style="left:507px;top:53px;width:0.8px;height:11px;background:#5a9cd8"></div>
<div class="a" style="left:512px;top:53px;width:0.8px;height:11px;background:#5a9cd8"></div>
<div class="a" style="left:520px;top:53px;width:1.3px;height:11px;background:#5a9cd8"></div>
<div class="a" style="left:527px;top:53px;width:1px;height:11px;background:#5a9cd8"></div>
<div class="a" style="left:532px;top:53px;width:0.8px;height:11px;background:#5a9cd8"></div>
<div class="a" style="left:545px;top:53px;width:1.3px;height:11px;background:#5a9cd8"></div>
<div class="a" style="left:563px;top:53px;width:0.8px;height:11px;background:#5a9cd8"></div>
<div class="a" style="left:571px;top:53px;width:0.8px;height:11px;background:#5a9cd8"></div>
<div class="a" style="left:578px;top:53px;width:1.3px;height:11px;background:#5a9cd8"></div>
<div class="a" style="left:583px;top:53px;width:1.3px;height:11px;background:#5a9cd8"></div>
<div class="a" style="left:586px;top:53px;width:1.3px;height:11px;background:#5a9cd8"></div>
<div class="a" style="left:590px;top:53px;width:0.8px;height:11px;background:#5a9cd8"></div>
<div class="a" style="left:595px;top:53px;width:1.3px;height:11px;background:#5a9cd8"></div>
<div class="a" style="left:602px;top:53px;width:1.3px;height:11px;background:#5a9cd8"></div>
<div class="a" style="left:606px;top:53px;width:1px;height:11px;background:#5a9cd8"></div>
<div class="a" style="left:610px;top:53px;width:0.8px;height:11px;background:#5a9cd8"></div>
<div class="a" style="left:614px;top:53px;width:0.8px;height:11px;background:#5a9cd8"></div>
<div class="a" style="left:616px;top:53px;width:0.8px;height:11px;background:#5a9cd8"></div>
<div class="a" style="left:444.5px;top:54px;width:2.5px;height:5px;background:#fff;border-radius:1px"></div>
<div class="a" style="left:620px;top:53px;width:23px;height:11px;background:#7f8d8d"></div>
<div class="a" style="left:643px;top:53px;width:355px;height:11px;background:#042a35"></div>
<div class="a" style="left:1001px;top:55px;width:1px;height:8px;background:repeating-linear-gradient(#888 0 1px,transparent 1px 3px)"></div>
<div class="a" style="left:1010px;top:53px;width:111px;height:11px;background:#fff;border-radius:3px;box-shadow:0 0 0 .6px #c4c4c4"></div>
<div class="a" style="left:1113px;top:53px;width:8px;height:11px;background:linear-gradient(#6aa8f8,#2a72e8);border-radius:0 3px 3px 0"></div>
<svg class="a" style="left:1114px;top:54px;" width="6" height="9" viewBox="0 0 6 9"><path d="M1 3l2-1.6 2 1.6M1 6l2 1.6 2-1.6" stroke="#fff" stroke-width=".8" fill="none"/></svg>
<div class="a" style="left:192.8px;top:75.5px;width:8.8px;height:8.8px;background:#bff3f6"></div>
<div class="t" style="left:208px;top:75px;font-size:8.6px;color:#2a2a2a">Library function</div>
<div class="a" style="left:272.7px;top:75.5px;width:8.8px;height:8.8px;background:#c6c6c6"></div>
<div class="t" style="left:288px;top:75px;font-size:8.6px;color:#2a2a2a">Data</div>
<div class="a" style="left:312px;top:75.5px;width:8.8px;height:8.8px;background:#1a9ce0"></div>
<div class="t" style="left:327px;top:75px;font-size:8.6px;color:#2a2a2a">Regular function</div>
<div class="a" style="left:396.5px;top:75.5px;width:8.8px;height:8.8px;background:#b5ae72"></div>
<div class="t" style="left:411px;top:75px;font-size:8.6px;color:#2a2a2a">Unexplored</div>
<div class="a" style="left:461.5px;top:75.5px;width:8.8px;height:8.8px;background:#b27352"></div>
<div class="t" style="left:476px;top:75px;font-size:8.6px;color:#2a2a2a">Instruction</div>
<div class="a" style="left:522.5px;top:75.5px;width:8.8px;height:8.8px;background:#f6a6f0"></div>
<div class="t" style="left:537.5px;top:75px;font-size:8.6px;color:#2a2a2a">External symbol</div>
<div class="a" style="left:184px;top:84.2px;width:109.5px;height:19.3px;background:linear-gradient(#ececec,#e4e4e4);border-bottom:1px solid #c8c8c8"></div>
<div class="a" style="left:187.5px;top:87.5px;width:11px;height:11.5px;background:linear-gradient(#6a9ac8 0 1.8px,#f2f8fc 1.8px);box-shadow:inset 0 0 0 .7px #7a9ac0"><svg class="a" style="left:2px;top:2px" width="7" height="8" viewBox="0 0 7 8"><path d="M5.6 1.2Q4.6.4 4 1.6L2.6 6.6Q2.1 7.8 1 7.1M2.4 3.3h2.6" fill="none" stroke="#1a1a1a" stroke-width=".85"/></svg></div>
<div class="t" style="left:202px;top:88.8px;font-size:9px;color:#222">Functio...</div>
<div class="a" style="left:245.5px;top:88.5px;width:6px;height:6px;border:.8px solid #333;border-top-width:1.6px;background:#fff"></div>
<div class="a" style="left:260.5px;top:89px;width:9px;height:9px;border-radius:50%;background:#444"><div class="a" style="left:2px;top:2.2px;width:5px;height:4.5px;border:1px solid #ddd;border-radius:50%"></div></div>
<div class="a" style="left:278.5px;top:89px;width:9px;height:9px;border-radius:50%;background:#3a3a3a"></div>
<svg class="a" style="left:278.5px;top:89px;" width="9" height="9" viewBox="0 0 9 9"><path d="M2.7 2.7l3.6 3.6M6.3 2.7l-3.6 3.6" stroke="#eee" stroke-width="1.3"/></svg>
<div class="a" style="left:184px;top:104px;width:109.3px;height:526.5px;background:#fff;border-right:1px solid #d4d4d4;border-bottom:1px solid #d4d4d4;overflow:hidden">
<div class="a" style="left:0;top:0;width:99px;height:13px;background:linear-gradient(#fcfcfc,#f0f0f0);border-bottom:1px solid #e4e4e4"></div>
<div class="t" style="left:6px;top:3px;font-size:7.3px;color:#444">Function name</div>
<div class="a" style="left:6.9px;top:13.499999999999996px;width:10px;height:10.3px;background:linear-gradient(#3a6898 0 1.8px,#e6f3fb 1.8px);box-shadow:inset 0 0 0 .7px #7aa6d0"><svg class="a" style="left:1.5px;top:1.8px" width="7" height="8" viewBox="0 0 7 8"><path d="M5.6 1.2Q4.6.4 4 1.6L2.6 6.6Q2.1 7.8 1 7.1M2.4 3.3h2.6" fill="none" stroke="#1a1a1a" stroke-width=".85"/></svg></div>
<div class="t" style="left:20.8px;top:14.10px;font-size:8.5px;color:#1e1e1e">R$raw__init_@V</div>
<div class="a" style="left:6.9px;top:24.829999999999995px;width:10px;height:10.3px;background:linear-gradient(#3a6898 0 1.8px,#e6f3fb 1.8px);box-shadow:inset 0 0 0 .7px #7aa6d0"><svg class="a" style="left:1.5px;top:1.8px" width="7" height="8" viewBox="0 0 7 8"><path d="M5.6 1.2Q4.6.4 4 1.6L2.6 6.6Q2.1 7.8 1 7.1M2.4 3.3h2.6" fill="none" stroke="#1a1a1a" stroke-width=".85"/></svg></div>
<div class="t" style="left:20.8px;top:25.43px;font-size:8.5px;color:#1e1e1e">R$string__init_@V</div>
<div class="a" style="left:6.9px;top:36.16000000000001px;width:10px;height:10.3px;background:linear-gradient(#3a6898 0 1.8px,#e6f3fb 1.8px);box-shadow:inset 0 0 0 .7px #7aa6d0"><svg class="a" style="left:1.5px;top:1.8px" width="7" height="8" viewBox="0 0 7 8"><path d="M5.6 1.2Q4.6.4 4 1.6L2.6 6.6Q2.1 7.8 1 7.1M2.4 3.3h2.6" fill="none" stroke="#1a1a1a" stroke-width=".85"/></svg></div>
<div class="t" style="left:20.8px;top:36.76px;font-size:8.5px;color:#1e1e1e">R$style__init_@V</div>
<div class="a" style="left:6.9px;top:47.489999999999995px;width:10px;height:10.3px;background:linear-gradient(#3a6898 0 1.8px,#e6f3fb 1.8px);box-shadow:inset 0 0 0 .7px #7aa6d0"><svg class="a" style="left:1.5px;top:1.8px" width="7" height="8" viewBox="0 0 7 8"><path d="M5.6 1.2Q4.6.4 4 1.6L2.6 6.6Q2.1 7.8 1 7.1M2.4 3.3h2.6" fill="none" stroke="#1a1a1a" stroke-width=".85"/></svg></div>
<div class="t" style="left:20.8px;top:48.09px;font-size:8.5px;color:#1e1e1e">R$styleable__clinit_</div>
<div class="a" style="left:6.9px;top:58.82000000000001px;width:10px;height:10.3px;background:linear-gradient(#3a6898 0 1.8px,#e6f3fb 1.8px);box-shadow:inset 0 0 0 .7px #7aa6d0"><svg class="a" style="left:1.5px;top:1.8px" width="7" height="8" viewBox="0 0 7 8"><path d="M5.6 1.2Q4.6.4 4 1.6L2.6 6.6Q2.1 7.8 1 7.1M2.4 3.3h2.6" fill="none" stroke="#1a1a1a" stroke-width=".85"/></svg></div>
<div class="t" style="left:20.8px;top:59.42px;font-size:8.5px;color:#1e1e1e">R$styleable__init_@</div>
<div class="a" style="left:6.9px;top:70.14999999999999px;width:10px;height:10.3px;background:linear-gradient(#3a6898 0 1.8px,#e6f3fb 1.8px);box-shadow:inset 0 0 0 .7px #7aa6d0"><svg class="a" style="left:1.5px;top:1.8px" width="7" height="8" viewBox="0 0 7 8"><path d="M5.6 1.2Q4.6.4 4 1.6L2.6 6.6Q2.1 7.8 1 7.1M2.4 3.3h2.6" fill="none" stroke="#1a1a1a" stroke-width=".85"/></svg></div>
<div class="t" style="left:20.8px;top:70.75px;font-size:8.5px;color:#1e1e1e">R__init_@V</div>
<div class="a" style="left:6.9px;top:81.48px;width:10px;height:10.3px;background:linear-gradient(#3a6898 0 1.8px,#e6f3fb 1.8px);box-shadow:inset 0 0 0 .7px #7aa6d0"><svg class="a" style="left:1.5px;top:1.8px" width="7" height="8" viewBox="0 0 7 8"><path d="M5.6 1.2Q4.6.4 4 1.6L2.6 6.6Q2.1 7.8 1 7.1M2.4 3.3h2.6" fill="none" stroke="#1a1a1a" stroke-width=".85"/></svg></div>
<div class="t" style="left:20.8px;top:82.08px;font-size:8.5px;color:#1e1e1e">a__clinit_@V_7</div>
<div class="a" style="left:6.9px;top:92.81000000000002px;width:10px;height:10.3px;background:linear-gradient(#3a6898 0 1.8px,#e6f3fb 1.8px);box-shadow:inset 0 0 0 .7px #7aa6d0"><svg class="a" style="left:1.5px;top:1.8px" width="7" height="8" viewBox="0 0 7 8"><path d="M5.6 1.2Q4.6.4 4 1.6L2.6 6.6Q2.1 7.8 1 7.1M2.4 3.3h2.6" fill="none" stroke="#1a1a1a" stroke-width=".85"/></svg></div>
<div class="t" style="left:20.8px;top:93.41px;font-size:8.5px;color:#1e1e1e">a__init_@V_10</div>
<div class="a" style="left:6.9px;top:104.14px;width:10px;height:10.3px;background:linear-gradient(#3a6898 0 1.8px,#e6f3fb 1.8px);box-shadow:inset 0 0 0 .7px #7aa6d0"><svg class="a" style="left:1.5px;top:1.8px" width="7" height="8" viewBox="0 0 7 8"><path d="M5.6 1.2Q4.6.4 4 1.6L2.6 6.6Q2.1 7.8 1 7.1M2.4 3.3h2.6" fill="none" stroke="#1a1a1a" stroke-width=".85"/></svg></div>
<div class="t" style="left:20.8px;top:104.74px;font-size:8.5px;color:#1e1e1e">a_a@VLLI_0</div>
<div class="a" style="left:6.9px;top:115.46999999999998px;width:10px;height:10.3px;background:linear-gradient(#3a6898 0 1.8px,#e6f3fb 1.8px);box-shadow:inset 0 0 0 .7px #7aa6d0"><svg class="a" style="left:1.5px;top:1.8px" width="7" height="8" viewBox="0 0 7 8"><path d="M5.6 1.2Q4.6.4 4 1.6L2.6 6.6Q2.1 7.8 1 7.1M2.4 3.3h2.6" fill="none" stroke="#1a1a1a" stroke-width=".85"/></svg></div>
<div class="t" style="left:20.8px;top:116.07px;font-size:8.5px;color:#1e1e1e">b__clinit_@V_2</div>
<div class="a" style="left:6.9px;top:126.8px;width:10px;height:10.3px;background:linear-gradient(#3a6898 0 1.8px,#e6f3fb 1.8px);box-shadow:inset 0 0 0 .7px #7aa6d0"><svg class="a" style="left:1.5px;top:1.8px" width="7" height="8" viewBox="0 0 7 8"><path d="M5.6 1.2Q4.6.4 4 1.6L2.6 6.6Q2.1 7.8 1 7.1M2.4 3.3h2.6" fill="none" stroke="#1a1a1a" stroke-width=".85"/></svg></div>
<div class="t" style="left:20.8px;top:127.40px;font-size:8.5px;color:#1e1e1e">b__init_@V_3</div>
<div class="a" style="left:6.9px;top:138.13px;width:10px;height:10.3px;background:linear-gradient(#3a6898 0 1.8px,#e6f3fb 1.8px);box-shadow:inset 0 0 0 .7px #7aa6d0"><svg class="a" style="left:1.5px;top:1.8px" width="7" height="8" viewBox="0 0 7 8"><path d="M5.6 1.2Q4.6.4 4 1.6L2.6 6.6Q2.1 7.8 1 7.1M2.4 3.3h2.6" fill="none" stroke="#1a1a1a" stroke-width=".85"/></svg></div>
<div class="t" style="left:20.8px;top:138.73px;font-size:8.5px;color:#1e1e1e">b_a@VLLII</div>
<div class="a" style="left:6.9px;top:149.45999999999998px;width:10px;height:10.3px;background:linear-gradient(#3a6898 0 1.8px,#e6f3fb 1.8px);box-shadow:inset 0 0 0 .7px #7aa6d0"><svg class="a" style="left:1.5px;top:1.8px" width="7" height="8" viewBox="0 0 7 8"><path d="M5.6 1.2Q4.6.4 4 1.6L2.6 6.6Q2.1 7.8 1 7.1M2.4 3.3h2.6" fill="none" stroke="#1a1a1a" stroke-width=".85"/></svg></div>
<div class="t" style="left:20.8px;top:150.06px;font-size:8.5px;color:#1e1e1e">c__init_@VL_6</div>
<div class="a" style="left:6.9px;top:160.78999999999996px;width:10px;height:10.3px;background:linear-gradient(#3a6898 0 1.8px,#e6f3fb 1.8px);box-shadow:inset 0 0 0 .7px #7aa6d0"><svg class="a" style="left:1.5px;top:1.8px" width="7" height="8" viewBox="0 0 7 8"><path d="M5.6 1.2Q4.6.4 4 1.6L2.6 6.6Q2.1 7.8 1 7.1M2.4 3.3h2.6" fill="none" stroke="#1a1a1a" stroke-width=".85"/></svg></div>
<div class="t" style="left:20.8px;top:161.39px;font-size:8.5px;color:#1e1e1e">d__init_@V_3</div>
<div class="a" style="left:6.9px;top:172.12px;width:10px;height:10.3px;background:linear-gradient(#3a6898 0 1.8px,#e6f3fb 1.8px);box-shadow:inset 0 0 0 .7px #7aa6d0"><svg class="a" style="left:1.5px;top:1.8px" width="7" height="8" viewBox="0 0 7 8"><path d="M5.6 1.2Q4.6.4 4 1.6L2.6 6.6Q2.1 7.8 1 7.1M2.4 3.3h2.6" fill="none" stroke="#1a1a1a" stroke-width=".85"/></svg></div>
<div class="t" style="left:20.8px;top:172.72px;font-size:8.5px;color:#1e1e1e">e__init_@V_4</div>
<div class="a" style="left:6.9px;top:183.45px;width:10px;height:10.3px;background:linear-gradient(#3a6898 0 1.8px,#e6f3fb 1.8px);box-shadow:inset 0 0 0 .7px #7aa6d0"><svg class="a" style="left:1.5px;top:1.8px" width="7" height="8" viewBox="0 0 7 8"><path d="M5.6 1.2Q4.6.4 4 1.6L2.6 6.6Q2.1 7.8 1 7.1M2.4 3.3h2.6" fill="none" stroke="#1a1a1a" stroke-width=".85"/></svg></div>
<div class="t" style="left:20.8px;top:184.05px;font-size:8.5px;color:#1e1e1e">e_a@VLL_0</div>
<div class="a" style="left:6.9px;top:194.77999999999997px;width:10px;height:10.3px;background:linear-gradient(#3a6898 0 1.8px,#e6f3fb 1.8px);box-shadow:inset 0 0 0 .7px #7aa6d0"><svg class="a" style="left:1.5px;top:1.8px" width="7" height="8" viewBox="0 0 7 8"><path d="M5.6 1.2Q4.6.4 4 1.6L2.6 6.6Q2.1 7.8 1 7.1M2.4 3.3h2.6" fill="none" stroke="#1a1a1a" stroke-width=".85"/></svg></div>
<div class="t" style="left:20.8px;top:195.38px;font-size:8.5px;color:#1e1e1e">e_a@VLLI</div>
<div class="a" style="left:6.9px;top:206.11px;width:10px;height:10.3px;background:linear-gradient(#3a6898 0 1.8px,#e6f3fb 1.8px);box-shadow:inset 0 0 0 .7px #7aa6d0"><svg class="a" style="left:1.5px;top:1.8px" width="7" height="8" viewBox="0 0 7 8"><path d="M5.6 1.2Q4.6.4 4 1.6L2.6 6.6Q2.1 7.8 1 7.1M2.4 3.3h2.6" fill="none" stroke="#1a1a1a" stroke-width=".85"/></svg></div>
<div class="t" style="left:20.8px;top:206.71px;font-size:8.5px;color:#1e1e1e">f__init_@V_2</div>
<div class="a" style="left:6.9px;top:217.44px;width:10px;height:10.3px;background:linear-gradient(#3a6898 0 1.8px,#e6f3fb 1.8px);box-shadow:inset 0 0 0 .7px #7aa6d0"><svg class="a" style="left:1.5px;top:1.8px" width="7" height="8" viewBox="0 0 7 8"><path d="M5.6 1.2Q4.6.4 4 1.6L2.6 6.6Q2.1 7.8 1 7.1M2.4 3.3h2.6" fill="none" stroke="#1a1a1a" stroke-width=".85"/></svg></div>
<div class="t" style="left:20.8px;top:218.04px;font-size:8.5px;color:#1e1e1e">f_a@ILL_0</div>
<div class="a" style="left:6.9px;top:228.76999999999998px;width:10px;height:10.3px;background:linear-gradient(#3a6898 0 1.8px,#e6f3fb 1.8px);box-shadow:inset 0 0 0 .7px #7aa6d0"><svg class="a" style="left:1.5px;top:1.8px" width="7" height="8" viewBox="0 0 7 8"><path d="M5.6 1.2Q4.6.4 4 1.6L2.6 6.6Q2.1 7.8 1 7.1M2.4 3.3h2.6" fill="none" stroke="#1a1a1a" stroke-width=".85"/></svg></div>
<div class="t" style="left:20.8px;top:229.37px;font-size:8.5px;color:#1e1e1e">f_a@VLL</div>
<div class="a" style="left:6.9px;top:240.09999999999997px;width:10px;height:10.3px;background:linear-gradient(#3a6898 0 1.8px,#e6f3fb 1.8px);box-shadow:inset 0 0 0 .7px #7aa6d0"><svg class="a" style="left:1.5px;top:1.8px" width="7" height="8" viewBox="0 0 7 8"><path d="M5.6 1.2Q4.6.4 4 1.6L2.6 6.6Q2.1 7.8 1 7.1M2.4 3.3h2.6" fill="none" stroke="#1a1a1a" stroke-width=".85"/></svg></div>
<div class="t" style="left:20.8px;top:240.70px;font-size:8.5px;color:#1e1e1e">f_a@LL_6</div>
<div class="a" style="left:6.9px;top:251.43px;width:10px;height:10.3px;background:linear-gradient(#3a6898 0 1.8px,#e6f3fb 1.8px);box-shadow:inset 0 0 0 .7px #7aa6d0"><svg class="a" style="left:1.5px;top:1.8px" width="7" height="8" viewBox="0 0 7 8"><path d="M5.6 1.2Q4.6.4 4 1.6L2.6 6.6Q2.1 7.8 1 7.1M2.4 3.3h2.6" fill="none" stroke="#1a1a1a" stroke-width=".85"/></svg></div>
<div class="t" style="left:20.8px;top:252.03px;font-size:8.5px;color:#1e1e1e">a__clinit_@V_8</div>
<div class="a" style="left:6.9px;top:262.76px;width:10px;height:10.3px;background:linear-gradient(#3a6898 0 1.8px,#e6f3fb 1.8px);box-shadow:inset 0 0 0 .7px #7aa6d0"><svg class="a" style="left:1.5px;top:1.8px" width="7" height="8" viewBox="0 0 7 8"><path d="M5.6 1.2Q4.6.4 4 1.6L2.6 6.6Q2.1 7.8 1 7.1M2.4 3.3h2.6" fill="none" stroke="#1a1a1a" stroke-width=".85"/></svg></div>
<div class="t" style="left:20.8px;top:263.36px;font-size:8.5px;color:#1e1e1e">a_a@LLL_1</div>
<div class="a" style="left:6.9px;top:274.09px;width:10px;height:10.3px;background:linear-gradient(#3a6898 0 1.8px,#e6f3fb 1.8px);box-shadow:inset 0 0 0 .7px #7aa6d0"><svg class="a" style="left:1.5px;top:1.8px" width="7" height="8" viewBox="0 0 7 8"><path d="M5.6 1.2Q4.6.4 4 1.6L2.6 6.6Q2.1 7.8 1 7.1M2.4 3.3h2.6" fill="none" stroke="#1a1a1a" stroke-width=".85"/></svg></div>
<div class="t" style="left:20.8px;top:274.69px;font-size:8.5px;color:#1e1e1e">a_b@LLL_0</div>
<div class="a" style="left:6.9px;top:285.42px;width:10px;height:10.3px;background:linear-gradient(#3a6898 0 1.8px,#e6f3fb 1.8px);box-shadow:inset 0 0 0 .7px #7aa6d0"><svg class="a" style="left:1.5px;top:1.8px" width="7" height="8" viewBox="0 0 7 8"><path d="M5.6 1.2Q4.6.4 4 1.6L2.6 6.6Q2.1 7.8 1 7.1M2.4 3.3h2.6" fill="none" stroke="#1a1a1a" stroke-width=".85"/></svg></div>
<div class="t" style="left:20.8px;top:286.02px;font-size:8.5px;color:#1e1e1e">a_c@LLL</div>
<div class="a" style="left:6.9px;top:296.75px;width:10px;height:10.3px;background:linear-gradient(#3a6898 0 1.8px,#e6f3fb 1.8px);box-shadow:inset 0 0 0 .7px #7aa6d0"><svg class="a" style="left:1.5px;top:1.8px" width="7" height="8" viewBox="0 0 7 8"><path d="M5.6 1.2Q4.6.4 4 1.6L2.6 6.6Q2.1 7.8 1 7.1M2.4 3.3h2.6" fill="none" stroke="#1a1a1a" stroke-width=".85"/></svg></div>
<div class="t" style="left:20.8px;top:297.35px;font-size:8.5px;color:#1e1e1e">a_d@LLL</div>
<div class="a" style="left:6.9px;top:308.08px;width:10px;height:10.3px;background:linear-gradient(#3a6898 0 1.8px,#e6f3fb 1.8px);box-shadow:inset 0 0 0 .7px #7aa6d0"><svg class="a" style="left:1.5px;top:1.8px" width="7" height="8" viewBox="0 0 7 8"><path d="M5.6 1.2Q4.6.4 4 1.6L2.6 6.6Q2.1 7.8 1 7.1M2.4 3.3h2.6" fill="none" stroke="#1a1a1a" stroke-width=".85"/></svg></div>
<div class="t" style="left:20.8px;top:308.68px;font-size:8.5px;color:#1e1e1e">b__clinit_@V_3</div>
<div class="a" style="left:6.9px;top:319.41px;width:10px;height:10.3px;background:linear-gradient(#3a6898 0 1.8px,#e6f3fb 1.8px);box-shadow:inset 0 0 0 .7px #7aa6d0"><svg class="a" style="left:1.5px;top:1.8px" width="7" height="8" viewBox="0 0 7 8"><path d="M5.6 1.2Q4.6.4 4 1.6L2.6 6.6Q2.1 7.8 1 7.1M2.4 3.3h2.6" fill="none" stroke="#1a1a1a" stroke-width=".85"/></svg></div>
<div class="t" style="left:20.8px;top:320.01px;font-size:8.5px;color:#1e1e1e">b__init_@V_4</div>
<div class="a" style="left:6.9px;top:330.74px;width:10px;height:10.3px;background:linear-gradient(#3a6898 0 1.8px,#e6f3fb 1.8px);box-shadow:inset 0 0 0 .7px #7aa6d0"><svg class="a" style="left:1.5px;top:1.8px" width="7" height="8" viewBox="0 0 7 8"><path d="M5.6 1.2Q4.6.4 4 1.6L2.6 6.6Q2.1 7.8 1 7.1M2.4 3.3h2.6" fill="none" stroke="#1a1a1a" stroke-width=".85"/></svg></div>
<div class="t" style="left:20.8px;top:331.34px;font-size:8.5px;color:#1e1e1e">b_a@LL_3</div>
<div class="a" style="left:6.9px;top:342.07px;width:10px;height:10.3px;background:linear-gradient(#3a6898 0 1.8px,#e6f3fb 1.8px);box-shadow:inset 0 0 0 .7px #7aa6d0"><svg class="a" style="left:1.5px;top:1.8px" width="7" height="8" viewBox="0 0 7 8"><path d="M5.6 1.2Q4.6.4 4 1.6L2.6 6.6Q2.1 7.8 1 7.1M2.4 3.3h2.6" fill="none" stroke="#1a1a1a" stroke-width=".85"/></svg></div>
<div class="t" style="left:20.8px;top:342.67px;font-size:8.5px;color:#1e1e1e">b_a@LLI</div>
<div class="a" style="left:6.9px;top:353.4px;width:10px;height:10.3px;background:linear-gradient(#3a6898 0 1.8px,#e6f3fb 1.8px);box-shadow:inset 0 0 0 .7px #7aa6d0"><svg class="a" style="left:1.5px;top:1.8px" width="7" height="8" viewBox="0 0 7 8"><path d="M5.6 1.2Q4.6.4 4 1.6L2.6 6.6Q2.1 7.8 1 7.1M2.4 3.3h2.6" fill="none" stroke="#1a1a1a" stroke-width=".85"/></svg></div>
<div class="t" style="left:20.8px;top:354.00px;font-size:8.5px;color:#1e1e1e">c__clinit_@V_3</div>
<div class="a" style="left:6.9px;top:364.73px;width:10px;height:10.3px;background:linear-gradient(#3a6898 0 1.8px,#e6f3fb 1.8px);box-shadow:inset 0 0 0 .7px #7aa6d0"><svg class="a" style="left:1.5px;top:1.8px" width="7" height="8" viewBox="0 0 7 8"><path d="M5.6 1.2Q4.6.4 4 1.6L2.6 6.6Q2.1 7.8 1 7.1M2.4 3.3h2.6" fill="none" stroke="#1a1a1a" stroke-width=".85"/></svg></div>
<div class="t" style="left:20.8px;top:365.33px;font-size:8.5px;color:#1e1e1e">c_a@LL_1</div>
<div class="a" style="left:6.9px;top:376.06px;width:10px;height:10.3px;background:linear-gradient(#3a6898 0 1.8px,#e6f3fb 1.8px);box-shadow:inset 0 0 0 .7px #7aa6d0"><svg class="a" style="left:1.5px;top:1.8px" width="7" height="8" viewBox="0 0 7 8"><path d="M5.6 1.2Q4.6.4 4 1.6L2.6 6.6Q2.1 7.8 1 7.1M2.4 3.3h2.6" fill="none" stroke="#1a1a1a" stroke-width=".85"/></svg></div>
<div class="t" style="left:20.8px;top:376.66px;font-size:8.5px;color:#1e1e1e">c_a@VLI</div>
<div class="a" style="left:6.9px;top:387.39px;width:10px;height:10.3px;background:linear-gradient(#3a6898 0 1.8px,#e6f3fb 1.8px);box-shadow:inset 0 0 0 .7px #7aa6d0"><svg class="a" style="left:1.5px;top:1.8px" width="7" height="8" viewBox="0 0 7 8"><path d="M5.6 1.2Q4.6.4 4 1.6L2.6 6.6Q2.1 7.8 1 7.1M2.4 3.3h2.6" fill="none" stroke="#1a1a1a" stroke-width=".85"/></svg></div>
<div class="t" style="left:20.8px;top:387.99px;font-size:8.5px;color:#1e1e1e">c_a@VLJ</div>
<div class="a" style="left:6.9px;top:398.72px;width:10px;height:10.3px;background:linear-gradient(#3a6898 0 1.8px,#e6f3fb 1.8px);box-shadow:inset 0 0 0 .7px #7aa6d0"><svg class="a" style="left:1.5px;top:1.8px" width="7" height="8" viewBox="0 0 7 8"><path d="M5.6 1.2Q4.6.4 4 1.6L2.6 6.6Q2.1 7.8 1 7.1M2.4 3.3h2.6" fill="none" stroke="#1a1a1a" stroke-width=".85"/></svg></div>
<div class="t" style="left:20.8px;top:399.32px;font-size:8.5px;color:#1e1e1e">c_a@VLL_9</div>
<div class="a" style="left:6.9px;top:410.05px;width:10px;height:10.3px;background:linear-gradient(#3a6898 0 1.8px,#e6f3fb 1.8px);box-shadow:inset 0 0 0 .7px #7aa6d0"><svg class="a" style="left:1.5px;top:1.8px" width="7" height="8" viewBox="0 0 7 8"><path d="M5.6 1.2Q4.6.4 4 1.6L2.6 6.6Q2.1 7.8 1 7.1M2.4 3.3h2.6" fill="none" stroke="#1a1a1a" stroke-width=".85"/></svg></div>
<div class="t" style="left:20.8px;top:410.65px;font-size:8.5px;color:#1e1e1e">c_b@LL_1</div>
<div class="a" style="left:6.9px;top:421.37999999999994px;width:10px;height:10.3px;background:linear-gradient(#3a6898 0 1.8px,#e6f3fb 1.8px);box-shadow:inset 0 0 0 .7px #7aa6d0"><svg class="a" style="left:1.5px;top:1.8px" width="7" height="8" viewBox="0 0 7 8"><path d="M5.6 1.2Q4.6.4 4 1.6L2.6 6.6Q2.1 7.8 1 7.1M2.4 3.3h2.6" fill="none" stroke="#1a1a1a" stroke-width=".85"/></svg></div>
<div class="t" style="left:20.8px;top:421.98px;font-size:8.5px;color:#1e1e1e">c_b@VLJ</div>
<div class="a" style="left:6.9px;top:432.71px;width:10px;height:10.3px;background:linear-gradient(#3a6898 0 1.8px,#e6f3fb 1.8px);box-shadow:inset 0 0 0 .7px #7aa6d0"><svg class="a" style="left:1.5px;top:1.8px" width="7" height="8" viewBox="0 0 7 8"><path d="M5.6 1.2Q4.6.4 4 1.6L2.6 6.6Q2.1 7.8 1 7.1M2.4 3.3h2.6" fill="none" stroke="#1a1a1a" stroke-width=".85"/></svg></div>
<div class="t" style="left:20.8px;top:433.31px;font-size:8.5px;color:#1e1e1e">c_b@VLL_1</div>
<div class="a" style="left:6.9px;top:444.04px;width:10px;height:10.3px;background:linear-gradient(#3a6898 0 1.8px,#e6f3fb 1.8px);box-shadow:inset 0 0 0 .7px #7aa6d0"><svg class="a" style="left:1.5px;top:1.8px" width="7" height="8" viewBox="0 0 7 8"><path d="M5.6 1.2Q4.6.4 4 1.6L2.6 6.6Q2.1 7.8 1 7.1M2.4 3.3h2.6" fill="none" stroke="#1a1a1a" stroke-width=".85"/></svg></div>
<div class="t" style="left:20.8px;top:444.64px;font-size:8.5px;color:#1e1e1e">c_c@IL</div>
<div class="a" style="left:6.9px;top:455.36999999999995px;width:10px;height:10.3px;background:linear-gradient(#3a6898 0 1.8px,#e6f3fb 1.8px);box-shadow:inset 0 0 0 .7px #7aa6d0"><svg class="a" style="left:1.5px;top:1.8px" width="7" height="8" viewBox="0 0 7 8"><path d="M5.6 1.2Q4.6.4 4 1.6L2.6 6.6Q2.1 7.8 1 7.1M2.4 3.3h2.6" fill="none" stroke="#1a1a1a" stroke-width=".85"/></svg></div>
<div class="t" style="left:20.8px;top:455.97px;font-size:8.5px;color:#1e1e1e">com_ftmqdplq_rtmst</div>
<div class="a" style="left:6.9px;top:466.7px;width:10px;height:10.3px;background:linear-gradient(#3a6898 0 1.8px,#e6f3fb 1.8px);box-shadow:inset 0 0 0 .7px #7aa6d0"><svg class="a" style="left:1.5px;top:1.8px" width="7" height="8" viewBox="0 0 7 8"><path d="M5.6 1.2Q4.6.4 4 1.6L2.6 6.6Q2.1 7.8 1 7.1M2.4 3.3h2.6" fill="none" stroke="#1a1a1a" stroke-width=".85"/></svg></div>
<div class="t" style="left:20.8px;top:467.30px;font-size:8.5px;color:#1e1e1e">c_e@VL_0</div>
<div class="a" style="left:6.9px;top:478.03000000000003px;width:10px;height:10.3px;background:linear-gradient(#3a6898 0 1.8px,#e6f3fb 1.8px);box-shadow:inset 0 0 0 .7px #7aa6d0"><svg class="a" style="left:1.5px;top:1.8px" width="7" height="8" viewBox="0 0 7 8"><path d="M5.6 1.2Q4.6.4 4 1.6L2.6 6.6Q2.1 7.8 1 7.1M2.4 3.3h2.6" fill="none" stroke="#1a1a1a" stroke-width=".85"/></svg></div>
<div class="t" style="left:20.8px;top:478.63px;font-size:8.5px;color:#1e1e1e">c_f@ZL</div>
<div class="a" style="left:6.9px;top:489.35999999999996px;width:10px;height:10.3px;background:linear-gradient(#3a6898 0 1.8px,#e6f3fb 1.8px);box-shadow:inset 0 0 0 .7px #7aa6d0"><svg class="a" style="left:1.5px;top:1.8px" width="7" height="8" viewBox="0 0 7 8"><path d="M5.6 1.2Q4.6.4 4 1.6L2.6 6.6Q2.1 7.8 1 7.1M2.4 3.3h2.6" fill="none" stroke="#1a1a1a" stroke-width=".85"/></svg></div>
<div class="t" style="left:20.8px;top:489.96px;font-size:8.5px;color:#1e1e1e">c_g@JL</div>
<div class="a" style="left:6.9px;top:500.69px;width:10px;height:10.3px;background:linear-gradient(#3a6898 0 1.8px,#e6f3fb 1.8px);box-shadow:inset 0 0 0 .7px #7aa6d0"><svg class="a" style="left:1.5px;top:1.8px" width="7" height="8" viewBox="0 0 7 8"><path d="M5.6 1.2Q4.6.4 4 1.6L2.6 6.6Q2.1 7.8 1 7.1M2.4 3.3h2.6" fill="none" stroke="#1a1a1a" stroke-width=".85"/></svg></div>
<div class="t" style="left:20.8px;top:501.29px;font-size:8.5px;color:#1e1e1e">d_a@LL_3</div>
<div class="a" style="left:6.9px;top:512.02px;width:10px;height:10.3px;background:linear-gradient(#3a6898 0 1.8px,#e6f3fb 1.8px);box-shadow:inset 0 0 0 .7px #7aa6d0"><svg class="a" style="left:1.5px;top:1.8px" width="7" height="8" viewBox="0 0 7 8"><path d="M5.6 1.2Q4.6.4 4 1.6L2.6 6.6Q2.1 7.8 1 7.1M2.4 3.3h2.6" fill="none" stroke="#1a1a1a" stroke-width=".85"/></svg></div>
<div class="t" style="left:20.8px;top:512.62px;font-size:8.5px;color:#1e1e1e">e__clinit_@V_2</div>
<div class="a" style="left:99px;top:0;width:9.3px;height:516px;background:#fafafa;border-left:.6px solid #e6e6e6"></div>
<div class="a" style="left:102px;top:95.5px;width:4.5px;height:11px;background:#c2c2c2;border-radius:2.5px"></div>
<div class="a" style="left:0;top:516px;width:99px;height:10px;background:#fafafa;border-top:.6px solid #e6e6e6"></div>
<div class="a" style="left:2.5px;top:519.5px;width:14px;height:5px;background:#c2c2c2;border-radius:2.5px"></div>
</div>
<div class="t" style="left:188.4px;top:631.7px;font-size:8.5px;color:#2a2a2a">Line 5772 of 30571</div>
<div class="a" style="left:293.6px;top:84.2px;width:832.4px;height:14.8px;background:#ebebeb"></div>
<div class="a" style="left:296px;top:91px;width:830px;height:8px;background:#dcdcdc"></div>
<div class="a" style="left:389.2px;top:84.8px;width:89.80000000000001px;height:13px;background:linear-gradient(#68a4f4,#3a7ce6);border-radius:3px 3px 3px 3px;box-shadow:0 .5px 1px rgba(0,0,0,.25)"></div>
<div class="a" style="left:395.2px;top:87px;width:8.6px;height:8.6px;border-radius:50%;background:#6a86b0"></div>
<svg class="a" style="left:395.2px;top:87px;" width="9" height="9" viewBox="0 0 9 9"><path d="M2.8 2.8l3 3M5.8 2.8l-3 3" stroke="#b8cce8" stroke-width="1.1"/></svg>
<div class="t" style="left:423.8px;top:86.9px;font-size:8.7px;color:#fff">IDA View-A</div>
<div class="a" style="left:479px;top:84.8px;width:99px;height:13.5px;background:#fbfbfb;border-right:.8px solid #d6d6d6"></div>
<div class="a" style="left:487.0px;top:87px;width:8.6px;height:8.6px;border-radius:50%;background:#4a4a4a"></div>
<svg class="a" style="left:487.0px;top:87px;" width="9" height="9" viewBox="0 0 9 9"><path d="M2.8 2.8l3 3M5.8 2.8l-3 3" stroke="#ddd" stroke-width="1.1"/></svg>
<div class="a" style="left:498px;top:85.8px;width:10.5px;height:11px;background:linear-gradient(#5a8ac0 0 1.5px,#eef6fc 1.5px);border:.8px solid #6a96c8"></div>
<div class="a" style="left:500px;top:89px;width:6px;height:6px;background:linear-gradient(135deg,#3a9a4a 40%,#fff 40% 60%,#3a6ac8 60%)"></div>
<div class="t" style="left:511.8px;top:87px;font-size:8.7px;color:#222">Strings window</div>
<div class="a" style="left:578px;top:84.8px;width:90.79999999999995px;height:13.5px;background:#fbfbfb;border-right:.8px solid #d6d6d6"></div>
<div class="a" style="left:585.7px;top:87px;width:8.6px;height:8.6px;border-radius:50%;background:#4a4a4a"></div>
<svg class="a" style="left:585.7px;top:87px;" width="9" height="9" viewBox="0 0 9 9"><path d="M2.8 2.8l3 3M5.8 2.8l-3 3" stroke="#ddd" stroke-width="1.1"/></svg>
<div class="a" style="left:597px;top:85.8px;width:10.5px;height:11px;background:linear-gradient(#5a8ac0 0 1.5px,#eef6fc 1.5px);border:.8px solid #6a96c8"></div>
<div class="a" style="left:599.2px;top:88.5px;width:6px;height:6px;border:1px solid #4a7ac8;border-radius:50%"></div>
<div class="t" style="left:613.5px;top:87px;font-size:8.7px;color:#222">Hex View-1</div>
<div class="a" style="left:668.8px;top:84.8px;width:91.90000000000009px;height:13.5px;background:#fbfbfb;border-right:.8px solid #d6d6d6"></div>
<div class="a" style="left:677.3000000000001px;top:87px;width:8.6px;height:8.6px;border-radius:50%;background:#4a4a4a"></div>
<svg class="a" style="left:677.3000000000001px;top:87px;" width="9" height="9" viewBox="0 0 9 9"><path d="M2.8 2.8l3 3M5.8 2.8l-3 3" stroke="#ddd" stroke-width="1.1"/></svg>
<div class="a" style="left:688px;top:85.8px;width:10.5px;height:11px;background:linear-gradient(#5a8ac0 0 1.5px,#eef6fc 1.5px);border:.8px solid #6a96c8"></div>
<div class="t" style="left:690.5px;top:88px;font-size:7px;color:#3a5a9a">A</div>
<div class="t" style="left:707px;top:87px;font-size:8.7px;color:#222">Structures</div>
<div class="a" style="left:760.7px;top:84.8px;width:90.79999999999995px;height:13.5px;background:#fbfbfb;border-right:.8px solid #d6d6d6"></div>
<div class="a" style="left:768.1px;top:87px;width:8.6px;height:8.6px;border-radius:50%;background:#4a4a4a"></div>
<svg class="a" style="left:768.1px;top:87px;" width="9" height="9" viewBox="0 0 9 9"><path d="M2.8 2.8l3 3M5.8 2.8l-3 3" stroke="#ddd" stroke-width="1.1"/></svg>
<div class="a" style="left:779px;top:85.8px;width:10.5px;height:11px;background:linear-gradient(#5a8ac0 0 1.5px,#eef6fc 1.5px);border:.8px solid #6a96c8"></div>
<div class="a" style="left:781px;top:88.5px;width:6px;height:6px;background:repeating-linear-gradient(#4a7ac8 0 1px,transparent 1px 2.5px)"></div>
<div class="t" style="left:804.6px;top:87px;font-size:8.7px;color:#222">Enums</div>
<div class="a" style="left:851.5px;top:84.8px;width:91.5px;height:13.5px;background:#fbfbfb;border-right:.8px solid #d6d6d6"></div>
<div class="a" style="left:859.7px;top:87px;width:8.6px;height:8.6px;border-radius:50%;background:#4a4a4a"></div>
<svg class="a" style="left:859.7px;top:87px;" width="9" height="9" viewBox="0 0 9 9"><path d="M2.8 2.8l3 3M5.8 2.8l-3 3" stroke="#ddd" stroke-width="1.1"/></svg>
<div class="a" style="left:870px;top:85.8px;width:10.5px;height:11px;background:linear-gradient(#5a8ac0 0 1.5px,#eef6fc 1.5px);border:.8px solid #6a96c8"></div>
<div class="a" style="left:872px;top:88.5px;width:6px;height:6px;background:repeating-linear-gradient(#4a7ac8 0 1px,transparent 1px 2.5px)"></div>
<div class="t" style="left:895.9px;top:87px;font-size:8.7px;color:#222">Imports</div>
<div class="a" style="left:943px;top:84.8px;width:90px;height:13.5px;background:#fbfbfb;border-right:.8px solid #d6d6d6"></div>
<div class="a" style="left:951.7px;top:87px;width:8.6px;height:8.6px;border-radius:50%;background:#4a4a4a"></div>
<svg class="a" style="left:951.7px;top:87px;" width="9" height="9" viewBox="0 0 9 9"><path d="M2.8 2.8l3 3M5.8 2.8l-3 3" stroke="#ddd" stroke-width="1.1"/></svg>
<div class="a" style="left:962px;top:85.8px;width:10.5px;height:11px;background:linear-gradient(#5a8ac0 0 1.5px,#eef6fc 1.5px);border:.8px solid #6a96c8"></div>
<div class="a" style="left:964px;top:88.5px;width:6px;height:6px;background:repeating-linear-gradient(#4a7ac8 0 1px,transparent 1px 2.5px)"></div>
<div class="t" style="left:987.4px;top:87px;font-size:8.7px;color:#222">Exports</div>
<div class="a" style="left:184px;top:84px;width:942px;height:1px;background:#c9c9c9"></div>
<div class="a" style="left:293.3px;top:84px;width:.8px;height:560px;background:#c4c4c4"></div>
<div class="a" style="left:293.5px;top:99px;width:2.5px;height:545px;background:#f4f4f4"></div>
<div class="a" style="left:346px;top:99px;width:5.3px;height:545px;background:#f2f2f2"></div>
<div class="a" style="left:296px;top:99px;width:50px;height:543.5px;background:#2e3638"></div>
<svg class="a" style="left:296px;top:99px;" width="50" height="544" viewBox="0 0 50 544"><path d="M15.5 3.5999999999999943V543.5M26.19999999999999 3.5999999999999943V543.5M37 3.5999999999999943V63H49" fill="none" stroke="#c25652" stroke-width="2.4" stroke-dasharray="3.3 2.2"/><path d="M26.19999999999999 165.60000000000002H49" stroke="#c25652" stroke-width="2.4" stroke-dasharray="3.3 2.2"/><path d="M26.19999999999999 286.4H49" stroke="#c25652" stroke-width="2.4" stroke-dasharray="3.3 2.2"/><path d="M26.19999999999999 473.70000000000005H49" stroke="#c25652" stroke-width="2.4" stroke-dasharray="3.3 2.2"/><path d="M15.5 183.5H49" stroke="#c25652" stroke-width="2.4" stroke-dasharray="3.3 2.2"/><path d="M15.5 305.5H49" stroke="#c25652" stroke-width="2.4" stroke-dasharray="3.3 2.2"/><path d="M15.5 491.6H49" stroke="#c25652" stroke-width="2.4" stroke-dasharray="3.3 2.2"/><path d="M12.2 5.399999999999994L15.5 1.1999999999999944L18.8 5.399999999999994z" fill="#cc4c4a"/><path d="M22.899999999999988 5.399999999999994L26.19999999999999 1.1999999999999944L29.49999999999999 5.399999999999994z" fill="#cc4c4a"/><path d="M33.7 5.399999999999994L37 1.1999999999999944L40.3 5.399999999999994z" fill="#cc4c4a"/><circle cx="45.30000000000001" cy="21.13" r="2.6" fill="#88cdea"/><circle cx="45.30000000000001" cy="39.76" r="2.6" fill="#88cdea"/><rect x="42.500000000000014" y="46.28" width="5.6" height="5.6" fill="#920808"/><circle cx="45.30000000000001" cy="58.40" r="2.6" fill="#88cdea"/><circle cx="45.30000000000001" cy="67.71" r="2.6" fill="#88cdea"/><circle cx="45.30000000000001" cy="77.03" r="2.6" fill="#88cdea"/><circle cx="45.30000000000001" cy="86.34" r="2.6" fill="#88cdea"/><circle cx="45.30000000000001" cy="95.66" r="2.6" fill="#88cdea"/><circle cx="45.30000000000001" cy="104.98" r="2.6" fill="#88cdea"/><circle cx="45.30000000000001" cy="114.29" r="2.6" fill="#88cdea"/><circle cx="45.30000000000001" cy="123.61" r="2.6" fill="#88cdea"/><circle cx="45.30000000000001" cy="132.92" r="2.6" fill="#88cdea"/><circle cx="45.30000000000001" cy="142.24" r="2.6" fill="#88cdea"/><circle cx="45.30000000000001" cy="151.56" r="2.6" fill="#88cdea"/><circle cx="45.30000000000001" cy="160.87" r="2.6" fill="#88cdea"/><circle cx="45.30000000000001" cy="170.19" r="2.6" fill="#88cdea"/><circle cx="45.30000000000001" cy="179.50" r="2.6" fill="#88cdea"/><circle cx="45.30000000000001" cy="188.82" r="2.6" fill="#88cdea"/><circle cx="45.30000000000001" cy="198.14" r="2.6" fill="#88cdea"/><circle cx="45.30000000000001" cy="207.45" r="2.6" fill="#88cdea"/><circle cx="45.30000000000001" cy="226.08" r="2.6" fill="#88cdea"/><circle cx="45.30000000000001" cy="235.40" r="2.6" fill="#88cdea"/><rect x="42.500000000000014" y="241.92" width="5.6" height="5.6" fill="#920808"/><circle cx="45.30000000000001" cy="254.03" r="2.6" fill="#88cdea"/><circle cx="45.30000000000001" cy="263.35" r="2.6" fill="#88cdea"/><circle cx="45.30000000000001" cy="272.66" r="2.6" fill="#88cdea"/><circle cx="45.30000000000001" cy="281.98" r="2.6" fill="#88cdea"/><rect x="42.500000000000014" y="288.50" width="5.6" height="5.6" fill="#920808"/><circle cx="45.30000000000001" cy="300.61" r="2.6" fill="#88cdea"/><rect x="42.500000000000014" y="307.13" width="5.6" height="5.6" fill="#920808"/><circle cx="45.30000000000001" cy="319.24" r="2.6" fill="#88cdea"/><circle cx="45.30000000000001" cy="328.56" r="2.6" fill="#88cdea"/><circle cx="45.30000000000001" cy="337.88" r="2.6" fill="#88cdea"/><circle cx="45.30000000000001" cy="347.19" r="2.6" fill="#88cdea"/><circle cx="45.30000000000001" cy="356.51" r="2.6" fill="#88cdea"/><circle cx="45.30000000000001" cy="365.82" r="2.6" fill="#88cdea"/><circle cx="45.30000000000001" cy="375.14" r="2.6" fill="#88cdea"/><circle cx="45.30000000000001" cy="384.46" r="2.6" fill="#88cdea"/><circle cx="45.30000000000001" cy="393.77" r="2.6" fill="#88cdea"/><circle cx="45.30000000000001" cy="403.09" r="2.6" fill="#88cdea"/><circle cx="45.30000000000001" cy="412.40" r="2.6" fill="#88cdea"/><circle cx="45.30000000000001" cy="421.72" r="2.6" fill="#88cdea"/><circle cx="45.30000000000001" cy="431.04" r="2.6" fill="#88cdea"/><circle cx="45.30000000000001" cy="440.35" r="2.6" fill="#88cdea"/><circle cx="45.30000000000001" cy="449.67" r="2.6" fill="#88cdea"/><circle cx="45.30000000000001" cy="458.98" r="2.6" fill="#88cdea"/><circle cx="45.30000000000001" cy="468.30" r="2.6" fill="#88cdea"/><rect x="42.500000000000014" y="474.82" width="5.6" height="5.6" fill="#920808"/><circle cx="45.30000000000001" cy="486.93" r="2.6" fill="#88cdea"/><rect x="42.500000000000014" y="493.45" width="5.6" height="5.6" fill="#920808"/><circle cx="45.30000000000001" cy="505.56" r="2.6" fill="#88cdea"/><circle cx="45.30000000000001" cy="514.88" r="2.6" fill="#88cdea"/></svg>
<div class="a" style="left:351.3px;top:99.2px;width:764.7px;height:530.8px;background:#042a35;overflow:hidden">
<div class="a" style="left:0;top:47.13px;width:765px;height:9.8px;background:#8e0508"></div>
<div class="a" style="left:0;top:242.77px;width:765px;height:9.8px;background:#8e0508"></div>
<div class="a" style="left:0;top:289.35px;width:765px;height:9.8px;background:#8e0508"></div>
<div class="a" style="left:0;top:307.98px;width:765px;height:9.8px;background:#8e0508"></div>
<div class="a" style="left:0;top:475.67px;width:765px;height:9.8px;background:#8e0508"></div>
<div class="a" style="left:0;top:494.30px;width:765px;height:9.8px;background:#8e0508"></div>
<div class="t mono" style="left:0.2px;top:1.70px;font-size:9.33px;font-weight:bold;-webkit-text-stroke:.25px currentColor"><span style="color:#9db0b0">CODE:002AB77E</span></div><div class="t mono" style="left:0.2px;top:11.02px;font-size:9.33px;font-weight:bold;-webkit-text-stroke:.25px currentColor"><span style="color:#9db0b0">CODE:002AB77E</span> <span style="color:#3a90d8">loc_2AB77E:</span>                             <span style="color:#5fbf98"># </span><span style="color:#7b8ce8">DATA XREF: CODE:002AB9B8 i</span></div><div class="t mono" style="left:0.2px;top:20.33px;font-size:9.33px;font-weight:bold;-webkit-text-stroke:.25px currentColor"><span style="color:#9db0b0">CODE:002AB77E</span>                 <span style="color:#a2b3b3">invoke-virtual</span>                  <span style="color:#90aa9c">{this}, </span><span style="color:#3a88d0">&lt;ref e.b() imp. @ _def_e_b@L_1&gt;</span><span style="color:#5fbf98"> # </span><span style="color:#a8e6cc">calls the e.b() method</span></div><div class="t mono" style="left:0.2px;top:29.65px;font-size:9.33px;font-weight:bold;-webkit-text-stroke:.25px currentColor"><span style="color:#9db0b0">CODE:002AB77E</span>                                         <span style="color:#5fbf98"># </span><span style="color:#a8e6cc">This gathers a bunch of information about the phone</span></div><div class="t mono" style="left:0.2px;top:38.96px;font-size:9.33px;font-weight:bold;-webkit-text-stroke:.25px currentColor"><span style="color:#9db0b0">CODE:002AB784</span>                 <span style="color:#a2b3b3">move-result-object</span>              <span style="color:#90aa9c">v3</span></div><div class="t mono" style="left:0.2px;top:48.28px;font-size:9.33px;font-weight:bold;-webkit-text-stroke:.25px currentColor"><span style="color:#dcb2aa">CODE:002AB786</span>                 <span style="color:#dcb2aa">const-string</span>                    <span style="color:#dcb2aa">v0, </span><span style="color:#7080cc">aCatProcVersion</span><span style="color:#d4a4a0"> # </span><span style="color:#f2d0c8">"cat /proc/version"</span></div><div class="t mono" style="left:0.2px;top:57.60px;font-size:9.33px;font-weight:bold;-webkit-text-stroke:.25px currentColor"><span style="color:#9db0b0">CODE:002AB78A</span>                 <span style="color:#a2b3b3">invoke-static</span>                   <span style="color:#90aa9c">{v0}, </span><span style="color:#3a88d0">&lt;ref d.a(ref) d_a@LL_3&gt;</span><span style="color:#5fbf98"> # </span><span style="color:#a8e6cc">call the rtmst.a.d.a() method</span></div><div class="t mono" style="left:0.2px;top:66.91px;font-size:9.33px;font-weight:bold;-webkit-text-stroke:.25px currentColor"><span style="color:#9db0b0">CODE:002AB790</span>                 <span style="color:#a2b3b3">move-result-object</span>              <span style="color:#90aa9c">v0</span></div><div class="t mono" style="left:0.2px;top:76.23px;font-size:9.33px;font-weight:bold;-webkit-text-stroke:.25px currentColor"><span style="color:#9db0b0">CODE:002AB792</span>                 <span style="color:#a2b3b3">new-instance</span>                    <span style="color:#90aa9c">v4, </span><span style="color:#3a88d0">&lt;t: HashMap&gt;</span></div><div class="t mono" style="left:0.2px;top:85.54px;font-size:9.33px;font-weight:bold;-webkit-text-stroke:.25px currentColor"><span style="color:#9db0b0">CODE:002AB796</span>                 <span style="color:#a2b3b3">invoke-direct</span>                   <span style="color:#90aa9c">{v4}, </span><span style="color:#3a88d0">&lt;void HashMap.&lt;init&gt;() imp. @ _def_HashMap__init_@V&gt;</span></div><div class="t mono" style="left:0.2px;top:94.86px;font-size:9.33px;font-weight:bold;-webkit-text-stroke:.25px currentColor"><span style="color:#9db0b0">CODE:002AB79C</span>                 <span style="color:#a2b3b3">sget-object</span>                     <span style="color:#90aa9c">v5, </span><span style="color:#3a88d0">stru_47AE0</span></div><div class="t mono" style="left:0.2px;top:104.18px;font-size:9.33px;font-weight:bold;-webkit-text-stroke:.25px currentColor"><span style="color:#9db0b0">CODE:002AB7A0</span>                 <span style="color:#a2b3b3">sget-object</span>                     <span style="color:#90aa9c">v6, </span><span style="color:#3a88d0">a_w</span></div><div class="t mono" style="left:0.2px;top:113.49px;font-size:9.33px;font-weight:bold;-webkit-text-stroke:.25px currentColor"><span style="color:#9db0b0">CODE:002AB7A4</span>                 <span style="color:#a2b3b3">const/4</span>                         <span style="color:#90aa9c">v7, </span><span style="color:#3a88d0">0</span><span style="color:#5fbf98"> # </span><span style="color:#a8e6cc">75006571E6CAFCF2037E299A29B4A4DE</span></div><div class="t mono" style="left:0.2px;top:122.81px;font-size:9.33px;font-weight:bold;-webkit-text-stroke:.25px currentColor"><span style="color:#9db0b0">CODE:002AB7A6</span>                 <span style="color:#a2b3b3">aget-object</span>                     <span style="color:#90aa9c">v6, v6, v7</span></div><div class="t mono" style="left:0.2px;top:132.12px;font-size:9.33px;font-weight:bold;-webkit-text-stroke:.25px currentColor"><span style="color:#9db0b0">CODE:002AB7AA</span>                 <span style="color:#a2b3b3">sget-object</span>                     <span style="color:#90aa9c">v7, </span><span style="color:#3a88d0">a_w</span></div><div class="t mono" style="left:0.2px;top:141.44px;font-size:9.33px;font-weight:bold;-webkit-text-stroke:.25px currentColor"><span style="color:#9db0b0">CODE:002AB7AE</span>                 <span style="color:#a2b3b3">const/4</span>                         <span style="color:#90aa9c">v8, </span><span style="color:#3a88d0">2</span><span style="color:#5fbf98"> # </span><span style="color:#a8e6cc">10</span></div><div class="t mono" style="left:0.2px;top:150.76px;font-size:9.33px;font-weight:bold;-webkit-text-stroke:.25px currentColor"><span style="color:#9db0b0">CODE:002AB7B0</span>                 <span style="color:#a2b3b3">aget-object</span>                     <span style="color:#90aa9c">v7, v7, v8</span></div><div class="t mono" style="left:0.2px;top:160.07px;font-size:9.33px;font-weight:bold;-webkit-text-stroke:.25px currentColor"><span style="color:#9db0b0">CODE:002AB7B4</span>                 <span style="color:#a2b3b3">invoke-static</span>                   <span style="color:#90aa9c">{v6, v7}, </span><span style="color:#3a88d0">&lt;ref e.c(ref, ref) e_c@LLL&gt;</span><span style="color:#5fbf98"> # </span><span style="color:#a8e6cc">call the rtmst.a.e.c() method</span></div><div class="t mono" style="left:0.2px;top:169.39px;font-size:9.33px;font-weight:bold;-webkit-text-stroke:.25px currentColor"><span style="color:#9db0b0">CODE:002AB7BA</span>                 <span style="color:#a2b3b3">move-result-object</span>              <span style="color:#90aa9c">v6</span><span style="color:#5fbf98"> # </span><span style="color:#a8e6cc">val is "037E299A29B4A4DE" ???</span></div><div class="t mono" style="left:0.2px;top:178.70px;font-size:9.33px;font-weight:bold;-webkit-text-stroke:.25px currentColor"><span style="color:#9db0b0">CODE:002AB7BC</span>                 <span style="color:#a2b3b3">invoke-static</span>                   <span style="color:#90aa9c">{v5, v6}, </span><span style="color:#3a88d0">&lt;ref a.d(ref, ref) a_d@LLL&gt;</span><span style="color:#5fbf98"> # </span><span style="color:#a8e6cc">call the e.d() method</span></div><div class="t mono" style="left:0.2px;top:188.02px;font-size:9.33px;font-weight:bold;-webkit-text-stroke:.25px currentColor"><span style="color:#4a8aa8">CODE:</span><span style="background:#e4e65a;color:#1a2a10">002AB7C2</span>                 <span style="color:#a2b3b3">move-result-object</span>              <span style="color:#90aa9c">v5</span><span style="color:#5fbf98"> # </span><span style="color:#a8e6cc">"channel_name"</span></div><div class="t mono" style="left:0.2px;top:197.34px;font-size:9.33px;font-weight:bold;-webkit-text-stroke:.25px currentColor"><span style="color:#9db0b0">CODE:002AB7C4</span>                 <span style="color:#a2b3b3">invoke-virtual</span>                  <span style="color:#90aa9c">{v3, v5, v10}, </span><span style="color:#3a88d0">&lt;ref JSONObject.put(ref, ref) imp. @ _def_JSONObject_put@LLL</span></div><div class="t mono" style="left:0.2px;top:206.65px;font-size:9.33px;font-weight:bold;-webkit-text-stroke:.25px currentColor"><span style="color:#9db0b0">CODE:002AB7CA</span>                 <span style="color:#a2b3b3">sget-object</span>                     <span style="color:#90aa9c">v5, </span><span style="color:#3a88d0">stru_47AE8</span><span style="color:#5fbf98"> # </span><span style="color:#a8e6cc">the call to the struck is the attribute e.l</span></div><div class="t mono" style="left:0.2px;top:215.97px;font-size:9.33px;font-weight:bold;-webkit-text-stroke:.25px currentColor"><span style="color:#9db0b0">CODE:002AB7CA</span>                                         <span style="color:#5fbf98"># </span><span style="color:#a8e6cc">??? /n3x1ZTnyF5+VXO26nHvQg==  ??</span></div><div class="t mono" style="left:0.2px;top:225.28px;font-size:9.33px;font-weight:bold;-webkit-text-stroke:.25px currentColor"><span style="color:#9db0b0">CODE:002AB7CE</span>                 <span style="color:#a2b3b3">sget-object</span>                     <span style="color:#90aa9c">v6, </span><span style="color:#3a88d0">a_w</span></div><div class="t mono" style="left:0.2px;top:234.60px;font-size:9.33px;font-weight:bold;-webkit-text-stroke:.25px currentColor"><span style="color:#9db0b0">CODE:002AB7D2</span>                 <span style="color:#a2b3b3">const/4</span>                         <span style="color:#90aa9c">v7, </span><span style="color:#3a88d0">0</span><span style="color:#5fbf98"> # </span><span style="color:#a8e6cc">75006571E6CAFCF2037E299A29B4A4DE</span></div><div class="t mono" style="left:0.2px;top:243.92px;font-size:9.33px;font-weight:bold;-webkit-text-stroke:.25px currentColor"><span style="color:#dcb2aa">CODE:002AB7D4</span>                 <span style="color:#dcb2aa">aget-object</span>                     <span style="color:#dcb2aa">v6, v6, v7</span></div><div class="t mono" style="left:0.2px;top:253.23px;font-size:9.33px;font-weight:bold;-webkit-text-stroke:.25px currentColor"><span style="color:#9db0b0">CODE:002AB7D8</span>                 <span style="color:#a2b3b3">sget-object</span>                     <span style="color:#90aa9c">v7, </span><span style="color:#3a88d0">a_w</span></div><div class="t mono" style="left:0.2px;top:262.55px;font-size:9.33px;font-weight:bold;-webkit-text-stroke:.25px currentColor"><span style="color:#9db0b0">CODE:002AB7DC</span>                 <span style="color:#a2b3b3">const/4</span>                         <span style="color:#90aa9c">v8, </span><span style="color:#3a88d0">2</span><span style="color:#5fbf98"> # </span><span style="color:#a8e6cc">10</span></div><div class="t mono" style="left:0.2px;top:271.86px;font-size:9.33px;font-weight:bold;-webkit-text-stroke:.25px currentColor"><span style="color:#9db0b0">CODE:002AB7DE</span>                 <span style="color:#a2b3b3">aget-object</span>                     <span style="color:#90aa9c">v7, v7, v8</span></div><div class="t mono" style="left:0.2px;top:281.18px;font-size:9.33px;font-weight:bold;-webkit-text-stroke:.25px currentColor"><span style="color:#9db0b0">CODE:002AB7E2</span>                 <span style="color:#a2b3b3">invoke-static</span>                   <span style="color:#90aa9c">{v6, v7}, </span><span style="color:#3a88d0">&lt;ref e.c(ref, ref) e_c@LLL&gt;</span></div><div class="t mono" style="left:0.2px;top:290.50px;font-size:9.33px;font-weight:bold;-webkit-text-stroke:.25px currentColor"><span style="color:#dcb2aa">CODE:002AB7E8</span>                 <span style="color:#dcb2aa">move-result-object</span>              <span style="color:#dcb2aa">v6</span></div><div class="t mono" style="left:0.2px;top:299.81px;font-size:9.33px;font-weight:bold;-webkit-text-stroke:.25px currentColor"><span style="color:#9db0b0">CODE:002AB7EA</span>                 <span style="color:#a2b3b3">invoke-static</span>                   <span style="color:#90aa9c">{v5, v6}, </span><span style="color:#3a88d0">&lt;ref a.d(ref, ref) a_d@LLL&gt;</span></div><div class="t mono" style="left:0.2px;top:309.13px;font-size:9.33px;font-weight:bold;-webkit-text-stroke:.25px currentColor"><span style="color:#dcb2aa">CODE:002AB7F0</span>                 <span style="color:#dcb2aa">move-result-object</span>              <span style="color:#dcb2aa">v5</span><span style="color:#d4a4a0"> # </span><span style="color:#f2d0c8">timestamp</span></div><div class="t mono" style="left:0.2px;top:318.44px;font-size:9.33px;font-weight:bold;-webkit-text-stroke:.25px currentColor"><span style="color:#9db0b0">CODE:002AB7F2</span>                 <span style="color:#a2b3b3">new-instance</span>                    <span style="color:#90aa9c">v6, </span><span style="color:#3a88d0">&lt;t: StringBuilder&gt;</span></div><div class="t mono" style="left:0.2px;top:327.76px;font-size:9.33px;font-weight:bold;-webkit-text-stroke:.25px currentColor"><span style="color:#9db0b0">CODE:002AB7F6</span>                 <span style="color:#a2b3b3">invoke-static</span>                   <span style="color:#90aa9c">{}, </span><span style="color:#3a88d0">&lt;long System.currentTimeMillis() imp. @ _def_System_currentTimeMillis@J&gt;</span></div><div class="t mono" style="left:0.2px;top:337.08px;font-size:9.33px;font-weight:bold;-webkit-text-stroke:.25px currentColor"><span style="color:#9db0b0">CODE:002AB7FC</span>                 <span style="color:#a2b3b3">move-result-wide</span>                <span style="color:#90aa9c">v7:v8</span></div><div class="t mono" style="left:0.2px;top:346.39px;font-size:9.33px;font-weight:bold;-webkit-text-stroke:.25px currentColor"><span style="color:#9db0b0">CODE:002AB7FE</span>                 <span style="color:#a2b3b3">invoke-static</span>                   <span style="color:#90aa9c">{v7, v8}, </span><span style="color:#3a88d0">&lt;ref String.valueOf(long) imp. @ _def_String_valueOf@LJ&gt;</span></div><div class="t mono" style="left:0.2px;top:355.71px;font-size:9.33px;font-weight:bold;-webkit-text-stroke:.25px currentColor"><span style="color:#9db0b0">CODE:002AB804</span>                 <span style="color:#a2b3b3">move-result-object</span>              <span style="color:#90aa9c">v7</span></div><div class="t mono" style="left:0.2px;top:365.02px;font-size:9.33px;font-weight:bold;-webkit-text-stroke:.25px currentColor"><span style="color:#9db0b0">CODE:002AB806</span>                 <span style="color:#a2b3b3">invoke-direct</span>                   <span style="color:#90aa9c">{v6, v7}, </span><span style="color:#3a88d0">&lt;void StringBuilder.&lt;init&gt;(ref) imp. @ _def_StringBuilder__init_@VL&gt;</span></div><div class="t mono" style="left:0.2px;top:374.34px;font-size:9.33px;font-weight:bold;-webkit-text-stroke:.25px currentColor"><span style="color:#9db0b0">CODE:002AB80C</span>                 <span style="color:#a2b3b3">invoke-virtual</span>                  <span style="color:#90aa9c">{v6}, </span><span style="color:#3a88d0">&lt;ref StringBuilder.toString() imp. @ _def_StringBuilder_toString@L&gt;</span></div><div class="t mono" style="left:0.2px;top:383.66px;font-size:9.33px;font-weight:bold;-webkit-text-stroke:.25px currentColor"><span style="color:#9db0b0">CODE:002AB812</span>                 <span style="color:#a2b3b3">move-result-object</span>              <span style="color:#90aa9c">v6</span></div><div class="t mono" style="left:0.2px;top:392.97px;font-size:9.33px;font-weight:bold;-webkit-text-stroke:.25px currentColor"><span style="color:#9db0b0">CODE:002AB814</span>                 <span style="color:#a2b3b3">invoke-virtual</span>                  <span style="color:#90aa9c">{v3, v5, v6}, </span><span style="color:#3a88d0">&lt;ref JSONObject.put(ref, ref) imp. @ _def_JSONObject_put@LLL&gt;</span></div><div class="t mono" style="left:0.2px;top:402.29px;font-size:9.33px;font-weight:bold;-webkit-text-stroke:.25px currentColor"><span style="color:#9db0b0">CODE:002AB81A</span>                 <span style="color:#a2b3b3">sget-object</span>                     <span style="color:#90aa9c">v5, </span><span style="color:#3a88d0">stru_47AD8</span></div><div class="t mono" style="left:0.2px;top:411.60px;font-size:9.33px;font-weight:bold;-webkit-text-stroke:.25px currentColor"><span style="color:#9db0b0">CODE:002AB81E</span>                 <span style="color:#a2b3b3">sget-object</span>                     <span style="color:#90aa9c">v6, </span><span style="color:#3a88d0">a_w</span></div><div class="t mono" style="left:0.2px;top:420.92px;font-size:9.33px;font-weight:bold;-webkit-text-stroke:.25px currentColor"><span style="color:#9db0b0">CODE:002AB822</span>                 <span style="color:#a2b3b3">const/4</span>                         <span style="color:#90aa9c">v7, </span><span style="color:#3a88d0">0</span><span style="color:#5fbf98"> # </span><span style="color:#a8e6cc">75006571E6CAFCF2037E299A29B4A4DE</span></div><div class="t mono" style="left:0.2px;top:430.24px;font-size:9.33px;font-weight:bold;-webkit-text-stroke:.25px currentColor"><span style="color:#9db0b0">CODE:002AB824</span>                 <span style="color:#a2b3b3">aget-object</span>                     <span style="color:#90aa9c">v6, v6, v7</span></div><div class="t mono" style="left:0.2px;top:439.55px;font-size:9.33px;font-weight:bold;-webkit-text-stroke:.25px currentColor"><span style="color:#9db0b0">CODE:002AB828</span>                 <span style="color:#a2b3b3">sget-object</span>                     <span style="color:#90aa9c">v7, </span><span style="color:#3a88d0">a_w</span></div><div class="t mono" style="left:0.2px;top:448.87px;font-size:9.33px;font-weight:bold;-webkit-text-stroke:.25px currentColor"><span style="color:#9db0b0">CODE:002AB82C</span>                 <span style="color:#a2b3b3">const/4</span>                         <span style="color:#90aa9c">v8, </span><span style="color:#3a88d0">2</span><span style="color:#5fbf98"> # </span><span style="color:#a8e6cc">10</span></div><div class="t mono" style="left:0.2px;top:458.18px;font-size:9.33px;font-weight:bold;-webkit-text-stroke:.25px currentColor"><span style="color:#9db0b0">CODE:002AB82E</span>                 <span style="color:#a2b3b3">aget-object</span>                     <span style="color:#90aa9c">v7, v7, v8</span></div><div class="t mono" style="left:0.2px;top:467.50px;font-size:9.33px;font-weight:bold;-webkit-text-stroke:.25px currentColor"><span style="color:#9db0b0">CODE:002AB832</span>                 <span style="color:#a2b3b3">invoke-static</span>                   <span style="color:#90aa9c">{v6, v7}, </span><span style="color:#3a88d0">&lt;ref e.c(ref, ref) e_c@LLL&gt;</span></div><div class="t mono" style="left:0.2px;top:476.82px;font-size:9.33px;font-weight:bold;-webkit-text-stroke:.25px currentColor"><span style="color:#dcb2aa">CODE:002AB838</span>                 <span style="color:#dcb2aa">move-result-object</span>              <span style="color:#dcb2aa">v6</span></div><div class="t mono" style="left:0.2px;top:486.13px;font-size:9.33px;font-weight:bold;-webkit-text-stroke:.25px currentColor"><span style="color:#9db0b0">CODE:002AB83A</span>                 <span style="color:#a2b3b3">invoke-static</span>                   <span style="color:#90aa9c">{v5, v6}, </span><span style="color:#3a88d0">&lt;ref a.d(ref, ref) a_d@LLL&gt;</span></div><div class="t mono" style="left:0.2px;top:495.45px;font-size:9.33px;font-weight:bold;-webkit-text-stroke:.25px currentColor"><span style="color:#dcb2aa">CODE:002AB840</span>                 <span style="color:#dcb2aa">move-result-object</span>              <span style="color:#dcb2aa">v5</span><span style="color:#d4a4a0"> # </span><span style="color:#f2d0c8">linux_version</span></div><div class="t mono" style="left:0.2px;top:504.76px;font-size:9.33px;font-weight:bold;-webkit-text-stroke:.25px currentColor"><span style="color:#9db0b0">CODE:002AB842</span>                 <span style="color:#a2b3b3">invoke-virtual</span>                  <span style="color:#90aa9c">{v3, v5, v0}, </span><span style="color:#3a88d0">&lt;ref JSONObject.put(ref, ref) imp. @ _def_JSONObject_put@LLL&gt;</span></div><div class="t mono" style="left:0.2px;top:514.08px;font-size:9.33px;font-weight:bold;-webkit-text-stroke:.25px currentColor"><span style="color:#9db0b0">CODE:002AB848</span>                 <span style="color:#a2b3b3">sget-object</span>                     <span style="color:#90aa9c">v0, </span><span style="color:#3a88d0">stru_47AC0</span></div>
</div>
<div class="a" style="left:1116px;top:99px;width:10px;height:531px;background:#fbfbfb"></div>
<div class="a" style="left:1118.7px;top:384.6px;width:5px;height:11.2px;background:#c6c6c6;border-radius:2.5px"></div>
<div class="a" style="left:351px;top:630px;width:775px;height:13px;background:#efefef;border-top:1px solid #d8d8d8"></div>
<div class="t" style="left:352px;top:631.5px;font-size:8.6px;color:#222">002AB7C2  002AB7C2: e_b@LLL+4A  (Synchronized with Hex View-1)</div>
<div class="a" style="left:184px;top:643px;width:942px;height:3px;background:#f6f6f6;border-bottom:1px solid #c8c8c8"></div>
<div class="a" style="left:184px;top:646px;width:942px;height:18px;background:#ececec"></div>
<div class="a" style="left:187.5px;top:648.2px;width:10.5px;height:11px;background:linear-gradient(#4a7ab8 0 2px,#f0f6fa 2px);border:.8px solid #6a96c8"><div class="a" style="left:1.5px;top:4px;width:6px;height:4px;background:#b8cde0"></div></div>
<div class="t" style="left:201.5px;top:649.3px;font-size:8.6px;color:#222">Output window</div>
<div class="a" style="left:1079px;top:648.5px;width:6px;height:6px;border:.8px solid #333;border-top-width:1.6px;background:#fff"></div>
<div class="a" style="left:1094px;top:649px;width:9px;height:9px;border-radius:50%;background:#444"><div class="a" style="left:2px;top:2.2px;width:5px;height:4.5px;border:1px solid #ddd;border-radius:50%"></div></div>
<div class="a" style="left:1111.5px;top:649px;width:9px;height:9px;border-radius:50%;background:#3a3a3a"></div>
<svg class="a" style="left:1111.5px;top:649px;" width="9" height="9" viewBox="0 0 9 9"><path d="M2.7 2.7l3.6 3.6M6.3 2.7l-3.6 3.6" stroke="#eee" stroke-width="1.3"/></svg>
<div class="a" style="left:184px;top:664.7px;width:932px;height:19.3px;background:#042a35;overflow:hidden">
<div class="t mono" style="left:3.4px;top:-0.10px;font-size:6.67px;font-weight:bold;color:#8fa3a3;-webkit-text-stroke:.2px currentColor">dalvik_debmod_t::close_remote()</div>
<div class="t mono" style="left:3.4px;top:6.10px;font-size:6.67px;font-weight:bold;color:#8fa3a3;-webkit-text-stroke:.2px currentColor">TCP-connection to adb server</div>
<div class="t mono" style="left:3.4px;top:12.30px;font-size:6.67px;font-weight:bold;color:#8fa3a3;-webkit-text-stroke:.2px currentColor">Target Android version 4.4, SDK version of the framework 19</div>
</div>
<div class="a" style="left:1116px;top:664.7px;width:10px;height:19.3px;background:#fbfbfb"></div>
<div class="a" style="left:184px;top:684px;width:942px;height:21px;background:#ececec;border-top:1px solid #d0d0d0"></div>
<div class="a" style="left:187.7px;top:692.4px;width:38.5px;height:10.7px;background:#fff;border-radius:2.5px;box-shadow:0 0 0 .6px #c8c8c8,0 .6px .6px rgba(0,0,0,.15)"></div>
<div class="t" style="left:193.5px;top:693px;font-size:8.5px;color:#222">Python</div>
<div class="a" style="left:228.7px;top:687.7px;width:897px;height:15.4px;background:#fff;border:.6px solid #d0d0d0;border-right:none"></div>
<div class="a" style="left:184px;top:705px;width:942px;height:15px;background:#ececec"></div>
<div class="t" style="left:185.5px;top:710.8px;font-size:8.5px;color:#222">AU:</div>
<div class="t" style="left:204.5px;top:710.8px;font-size:8.5px;color:#222">idle</div>
<div class="t" style="left:236px;top:710.8px;font-size:8.5px;color:#222">Up</div>
<div class="t" style="left:287px;top:710.8px;font-size:8.5px;color:#222">Disk: 66GB</div>
<svg class="a" style="left:1114px;top:707px;" width="12" height="12" viewBox="0 0 12 12"><path d="M11 3L3 11M11 7L7 11" stroke="#aaa" stroke-width=".8"/></svg>
<div class="a" style="left:0;top:0;width:1280px;height:15px;background:linear-gradient(#f4f4f4,#ececec);border-bottom:1px solid #b4b4b4"></div>
<svg class="a" style="left:13px;top:1.5px" width="10" height="12" viewBox="0 0 170 200"><path fill="#222" d="M150 68c-1 1-20 12-20 36 0 28 25 38 26 38 0 1-4 14-13 27-8 12-17 24-30 24s-17-8-32-8c-15 0-20 8-32 8S27 182 18 169C8 154 0 130 0 107c0-37 24-57 48-57 13 0 24 9 32 9 8 0 20-9 35-9 6 0 26 0 35 18zM104 33c6-7 10-17 10-27 0-1 0-3-1-4-10 0-21 7-28 14-6 6-11 16-11 26 0 2 0 3 1 3 1 0 2 1 3 1 9 0 20-6 26-13z"/></svg>
<div class="t" style="left:36px;top:2.8px;font-size:9.5px;font-weight:bold;color:#222">idaq</div>
<div class="a" style="left:898px;top:3px;width:10px;height:10px;border-radius:50%;background:radial-gradient(circle,#6ab83a 0 45%,#c8822a 50%)"></div>
<svg class="a" style="left:900px;top:5.5px;" width="6" height="5" viewBox="0 0 6 5"><path d="M.8 2.5l1.6 1.6L5.2 1" stroke="#fff" stroke-width="1" fill="none"/></svg>
<div class="t" style="left:909.3px;top:3px;font-size:9.6px;color:#2a2a2a">0:14</div>
<svg class="a" style="left:937.5px;top:2.5px;" width="11" height="11" viewBox="0 0 11 11"><circle cx="5.5" cy="5.5" r="4.4" fill="none" stroke="#333" stroke-width="1.1"/><circle cx="5.5" cy="5.5" r="2.3" fill="#333"/></svg>
<svg class="a" style="left:955px;top:2.5px;" width="13" height="11" viewBox="0 0 13 11"><path d="M9.5 3.2A4.6 4.6 0 1 0 6.5 10.3" fill="none" stroke="#333" stroke-width="1.2"/><rect x="7.2" y="6.2" width="5" height="4.3" fill="#333"/><path d="M8.2 6.5V5.2a1.5 1.5 0 0 1 3 0v1.3" fill="none" stroke="#333" stroke-width=".9"/></svg>
<svg class="a" style="left:972px;top:1.5px;" width="11" height="12" viewBox="0 0 11 12"><path d="M2 3.5L4 1h4.5Q10 1.5 10 5.5q0 4.5-1.5 5.5H6.5q-1-1-1-2H4q-2-.5-2.5-3z" fill="#1a1a1a"/><path d="M0.5 3.5h2.5V1" fill="#1a1a1a"/><circle cx="7.6" cy="9" r=".8" fill="#fff"/></svg>
<svg class="a" style="left:989px;top:3px;" width="11" height="10" viewBox="0 0 11 10"><rect x=".6" y=".6" width="6" height="6" fill="none" stroke="#333" stroke-width="1.2"/><rect x="3.8" y="3.6" width="6" height="6" fill="#f0f0f0" stroke="#333" stroke-width="1.2"/></svg>
<svg class="a" style="left:1008.5px;top:2.5px;" width="14" height="11" viewBox="0 0 14 11"><path d="M3.5 8H.8V.8h12.4V8h-2.7" fill="none" stroke="#444" stroke-width="1"/><path d="M3.5 10.5L7 6.5l3.5 4z" fill="#1a1a1a"/></svg>
<svg class="a" style="left:1031.5px;top:2.5px;" width="9" height="11" viewBox="0 0 9 11"><rect x=".5" y="5" width="7.5" height="5.5" fill="#222"/><path d="M2.2 5V3a2.3 2.3 0 0 1 4.6 0" fill="none" stroke="#222" stroke-width="1.2"/></svg>
<svg class="a" style="left:1052.5px;top:2px;" width="7" height="12" viewBox="0 0 7 12"><path d="M1 3.5l5 4-2.5 2.5V1.5L6 4 1 8" fill="none" stroke="#555" stroke-width=".9"/></svg>
<svg class="a" style="left:1069px;top:2.5px;" width="13" height="10" viewBox="0 0 13 10"><path d="M1 4Q6.5-1 12 4M2.8 6Q6.5 2.5 10.2 6M4.6 8Q6.5 6.2 8.4 8" fill="none" stroke="#222" stroke-width="1.3"/><circle cx="6.5" cy="9.3" r=".9" fill="#222"/></svg>
<svg class="a" style="left:1089px;top:3.5px;" width="8" height="8" viewBox="0 0 8 8"><path d="M0 2.5h2.5l3-2.5v8l-3-2.5H0z" fill="#333"/></svg>
<div class="t" style="left:1110.5px;top:3.2px;font-size:8.4px;color:#2a2a2a">100%</div>
<svg class="a" style="left:1135.5px;top:3px;" width="16" height="10" viewBox="0 0 16 10"><rect x=".6" y=".6" width="13" height="8.2" rx="1.2" fill="none" stroke="#333" stroke-width="1.1"/><rect x="2" y="2" width="10.2" height="5.4" fill="#555"/><rect x="14" y="3.2" width="1.6" height="3" fill="#333"/><path d="M8 2.2L5.5 5h2l-1.2 2.2" stroke="#eee" stroke-width=".8" fill="none"/></svg>
<div class="t" style="left:1160px;top:2.4px;font-size:9.7px;color:#222">Thu 10:07 AM</div>
<svg class="a" style="left:1232px;top:2.5px;" width="11" height="11" viewBox="0 0 11 11"><circle cx="4.3" cy="4.3" r="3.3" fill="none" stroke="#333" stroke-width="1.2"/><path d="M6.8 6.8l3.4 3.4" stroke="#333" stroke-width="1.4"/></svg>
<svg class="a" style="left:1253px;top:3px;" width="12" height="9" viewBox="0 0 12 9"><path d="M0 1h1.6M0 4.5h1.6M0 8h1.6M3 1h9M3 4.5h9M3 8h9" stroke="#333" stroke-width="1.2"/></svg>
<svg class="a" style="left:287px;top:98px" width="9" height="13" viewBox="0 0 9 13"><path d="M1 1v10l2.5-2.3 1.8 3.8 1.5-.7-1.8-3.7H8z" fill="#111" stroke="#fff" stroke-width=".7"/></svg>
</body></html>
